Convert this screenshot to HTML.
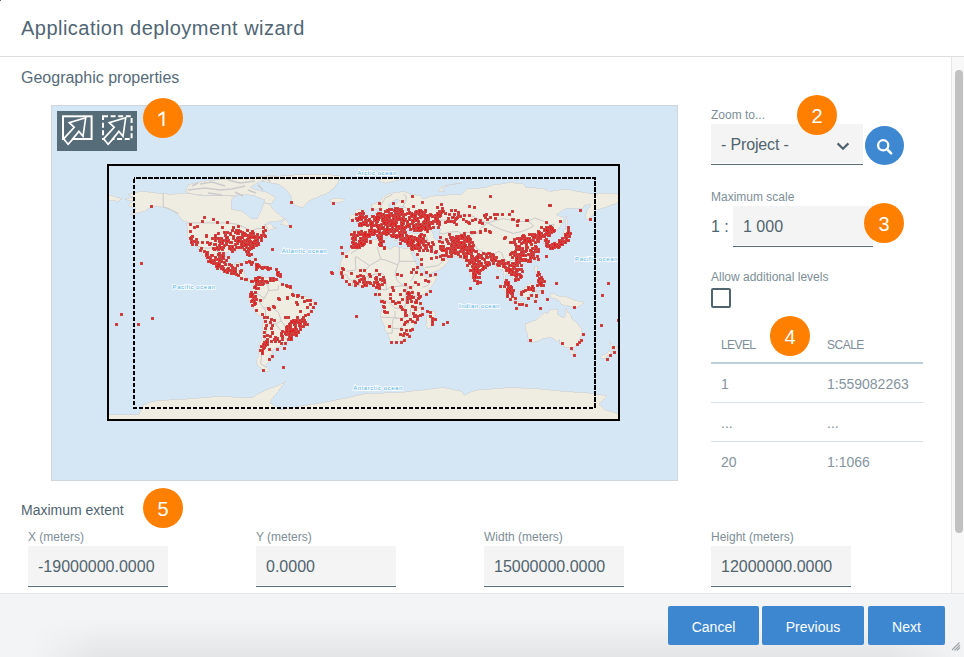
<!DOCTYPE html>
<html><head><meta charset="utf-8">
<style>
*{margin:0;padding:0;box-sizing:border-box}
html,body{width:964px;height:657px;overflow:hidden;background:#fff}
body{position:relative;font-family:"Liberation Sans",sans-serif;color:#4f6472}
.a{position:absolute;white-space:nowrap}
.t{line-height:1}
#title{left:21px;top:18px;font-size:20px;letter-spacing:0.47px;color:#4f6574}
#hdrline{left:0;top:56px;width:964px;height:1px;background:#dedfe0}
#sb{left:951px;top:57px;width:13px;height:536px;background:#f8f8f8;border-left:1px solid #e6e6e6}
#thumb{left:955px;top:70px;width:8px;height:463px;background:#c1c1c1;border-radius:4px}
#geo{left:21px;top:70px;font-size:16px;color:#566b79}
#map{left:51px;top:105px;width:627px;height:376px;background:#d5e6f4;border:1px solid #d0d6da;overflow:hidden}
#tb{left:57px;top:111px;width:80px;height:40px;background:#566c79}
.circ{position:absolute;width:40px;height:40px;border-radius:50%;background:#ff8000;color:#fff;font-size:20px;text-align:center;line-height:41px;padding-top:1px}
.lbl{font-size:12px;color:#7d8e98}
.inp{position:absolute;background:#f4f4f4;box-shadow:0 1px 0 #fff,0 2px 0 #586d7a;font-size:16px;color:#50646f}
.btn{position:absolute;top:606px;height:39px;background:#3d87d0;color:#fff;font-size:14px;text-align:center;line-height:42px;border-radius:2px}
#footer{left:0;top:593px;width:964px;height:64px;background:#f3f4f6;border-top:1px solid #e4e5e7}
th,td{font-weight:normal}
</style></head><body>
<div class="a" style="left:0;top:0;width:1px;height:1px;background:#666"></div>
<div class="a t" id="title">Application deployment wizard</div>
<div class="a" id="hdrline"></div>
<div class="a t" id="geo">Geographic properties</div>

<div class="a" id="map"><svg style="position:absolute;left:0;top:0" width="625" height="374" viewBox="52 106 625 374" shape-rendering="crispEdges"><path d="M124.8,199.3 133.3,197.3 127.7,194.6 140.7,191.2 153.3,192.6 163.2,193.6 171.8,194.5 181.7,193.0 191.7,193.8 200.2,195.9 210.2,195.9 224.4,195.9 242.9,195.2 257.1,198.7 271.3,205.8 271.3,206.8 275.6,211.5 282.7,217.2 284.5,218.6 278.4,221.5 269.9,221.5 264.2,225.0 271.3,223.6 272.7,227.2 277.0,227.9 269.9,230.0 264.2,230.3 264.2,233.3 258.5,235.0 255.7,240.0 256.4,242.5 248.6,247.8 250.0,254.2 249.3,256.8 246.3,253.5 244.3,249.9 237.2,249.6 236.5,251.4 230.1,250.5 225.4,253.5 224.7,260.6 227.2,265.6 229.3,266.7 234.3,266.0 235.3,262.7 240.0,262.0 238.6,266.3 237.9,270.1 244.3,270.0 245.0,275.5 245.0,278.4 250.7,279.1 253.7,280.4 252.8,281.9 250.7,281.9 247.8,281.9 242.9,279.1 238.6,274.8 232.9,273.8 227.2,271.3 221.5,269.8 215.8,266.3 211.6,262.0 208.7,258.5 205.9,254.9 203.8,251.4 200.6,247.5 203.0,251.4 204.5,255.6 207.4,259.9 204.0,257.3 201.3,252.8 197.8,247.8 195.4,244.2 192.2,243.5 189.5,239.0 187.0,235.1 187.4,226.9 186.4,223.8 188.8,222.9 182.4,220.4 178.2,215.1 174.6,211.5 168.9,209.4 164.6,207.6 156.1,206.1 148.3,208.4 144.7,211.5 139.0,212.2 133.3,214.4 129.8,215.2 136.2,209.4 133.3,207.6 128.4,205.8 129.8,203.0 134.8,200.9 129.1,200.9Z M262.1,181.2 278.7,184.4 286.0,189.6 291.1,195.9 292.2,203.1 297.3,206.1 302.5,207.8 308.9,201.0 318.1,196.9 326.3,193.8 334.7,187.6 338.9,180.2 340.9,176.1 322.2,174.1 291.1,175.1 269.9,177.0Z M185.5,191.8 188.7,184.4 204.2,181.2 216.7,179.8 228.1,179.2 242.6,178.3 258.5,176.7 272.7,175.3 275.6,176.3 261.4,181.0 255.7,183.8 250.0,187.4 257.1,190.2 267.0,192.3 275.6,197.6 271.3,203.7 261.4,203.3 250.0,201.6 240.0,198.7 228.6,195.2 207.3,195.5 190.2,193.8Z M279.8,224.9 284.8,219.2 288.4,222.5 288.9,225.0 287.7,226.3 284.1,224.9Z M254.2,280.4 256.4,277.7 259.9,276.5 262.1,275.0 262.8,277.0 266.3,277.7 272.7,277.5 276.3,277.7 278.4,280.5 282.7,284.1 289.8,285.5 292.6,290.0 292.9,294.0 300.5,296.2 307.6,296.9 313.7,300.4 314.0,304.7 310.4,309.7 308.3,317.5 306.1,322.5 302.6,325.3 294.8,329.6 294.5,333.1 289.8,338.8 286.9,341.7 282.0,342.4 282.7,345.9 275.6,348.1 271.3,350.9 272.7,353.0 267.8,358.0 270.2,360.6 265.6,365.1 266.6,367.3 269.9,370.8 266.3,371.5 261.4,368.7 257.1,365.1 256.4,359.4 258.5,354.5 259.2,345.2 262.1,338.1 262.1,328.2 263.8,318.6 256.4,313.9 252.8,306.8 248.1,299.3 250.0,295.4 249.5,291.9 251.7,289.8 253.8,286.9 253.5,283.1Z M355.4,241.7 362.3,242.3 368.0,240.3 378.0,239.6 379.4,240.3 378.7,243.5 379.4,245.4 385.4,246.7 390.8,249.5 392.2,247.8 392.5,246.4 397.2,246.4 400.0,247.8 405.7,248.5 409.7,248.1 410.1,249.9 411.4,253.5 414.2,259.2 416.8,264.9 418.5,267.3 420.2,270.6 423.2,274.1 425.3,275.8 427.0,277.8 430.6,276.7 436.6,275.8 436.7,277.8 434.9,281.9 432.0,286.2 428.5,289.8 423.5,294.0 420.9,296.6 419.5,299.4 419.9,302.6 419.6,305.4 421.4,307.5 421.5,313.2 421.4,314.6 416.1,318.5 414.0,323.2 414.2,326.7 410.4,329.6 410.0,333.8 407.1,336.7 402.9,340.0 400.0,341.0 395.0,341.2 392.2,342.1 389.9,341.2 389.6,338.1 387.2,333.3 385.1,330.3 384.4,324.6 380.5,317.5 380.8,311.8 383.1,309.0 382.7,305.1 381.2,301.1 380.5,299.0 376.8,294.3 377.3,289.8 377.7,286.9 376.0,286.2 372.3,286.5 370.1,283.6 365.9,283.9 360.9,285.9 357.4,285.2 353.1,286.3 348.8,283.4 345.0,280.5 342.4,277.2 339.9,275.0 338.9,271.7 340.3,264.9 341.0,262.7 339.6,262.7 343.1,255.5 345.3,253.1 349.8,250.6 350.1,246.4 353.8,244.5Z M433.9,309.7 435.6,314.6 434.6,316.8 430.6,328.2 427.8,328.9 425.9,325.3 426.3,321.0 427.0,315.6 429.9,314.6 432.0,311.8Z M355.8,241.4 360.9,240.4 363.8,237.4 363.3,236.4 368.3,233.0 368.0,231.2 370.1,230.9 374.4,230.3 376.3,229.5 378.7,231.6 381.5,233.6 386.1,235.7 385.9,238.6 387.9,237.1 390.1,235.6 386.5,233.6 381.2,229.3 381.2,228.0 383.2,227.7 385.1,229.3 390.1,232.3 391.5,235.7 393.6,237.8 394.3,240.3 396.5,240.7 397.2,238.6 396.0,235.0 400.7,234.6 401.2,236.4 402.1,238.6 402.9,240.3 407.1,240.7 410.4,241.3 414.9,240.7 414.7,242.8 414.2,245.0 413.4,246.7 412.5,248.2 410.1,249.9 411.4,252.4 412.4,253.1 413.5,250.6 415.7,255.6 418.5,259.2 419.5,262.0 422.1,265.6 424.5,269.8 425.2,274.1 427.8,274.4 433.4,272.4 438.0,270.4 442.7,267.7 444.8,265.9 446.9,263.4 448.8,260.6 446.9,259.0 444.8,258.5 443.8,255.2 442.0,257.0 437.7,258.5 437.0,255.9 436.3,257.6 434.9,254.9 432.7,252.1 432.0,249.9 434.9,249.9 437.0,253.1 441.3,254.6 444.1,254.2 445.5,256.0 451.2,256.8 458.3,256.5 460.5,258.9 463.3,260.3 466.9,262.7 467.3,265.7 468.3,269.8 470.1,274.4 472.6,280.1 474.0,281.1 475.4,279.4 478.0,274.1 477.8,270.6 480.8,269.1 485.8,264.4 487.5,262.0 490.3,261.6 493.9,260.6 495.0,263.2 497.9,269.8 498.6,269.8 502.6,269.1 503.8,274.1 503.8,278.4 506.4,284.1 507.8,288.6 511.0,290.8 512.1,290.3 510.8,286.2 509.1,283.8 506.4,280.5 504.8,277.7 506.0,273.5 507.3,274.7 509.5,275.5 512.8,277.7 512.9,280.4 515.6,277.8 519.1,276.1 519.2,273.0 517.4,269.6 515.4,266.3 515.5,263.4 517.4,262.0 520.8,262.2 524.5,260.9 529.7,259.9 533.7,255.9 537.1,250.6 535.8,248.5 535.1,245.7 533.3,242.8 534.8,241.3 538.0,239.4 533.0,239.7 531.6,237.7 533.7,236.0 536.5,234.4 536.1,237.4 540.1,236.0 541.7,238.8 543.7,239.3 543.4,243.5 547.5,242.5 547.8,240.0 545.1,236.0 548.2,234.3 549.6,232.4 552.9,231.7 556.5,230.3 560.7,225.8 563.6,221.2 563.6,217.2 559.3,216.1 556.0,214.8 560.0,212.2 565.7,208.4 575.7,208.0 582.8,208.3 584.2,205.1 591.3,204.8 586.3,211.2 585.6,218.6 586.6,220.1 591.3,216.5 594.9,212.7 595.9,210.1 605.5,207.3 611.2,204.7 616.2,203.7 618.3,201.3 619.8,200.2 619.8,194.5 612.6,193.3 605.5,193.0 591.3,193.6 579.9,191.9 570.0,189.9 562.9,189.5 548.6,191.6 546.5,189.5 538.7,188.1 525.9,187.6 523.0,183.8 515.9,183.1 511.7,182.1 503.1,183.8 491.8,185.2 486.1,187.4 477.5,188.1 466.1,189.1 460.5,194.5 449.1,194.8 442.0,195.5 430.6,196.2 426.3,198.0 422.1,198.0 420.6,195.9 410.7,193.9 403.6,191.6 396.5,192.3 387.9,194.0 383.7,196.6 381.5,199.4 378.0,202.3 371.3,204.4 371.3,206.7 371.9,209.0 373.7,210.1 375.8,209.7 378.7,208.0 379.7,209.4 381.5,212.2 382.0,213.8 384.4,213.0 387.2,212.2 390.1,208.0 388.6,205.8 388.9,203.7 393.6,200.9 395.8,199.0 399.7,200.2 394.2,206.3 396.3,207.6 399.3,206.8 403.6,206.6 406.4,207.4 403.6,208.0 397.2,208.4 397.9,211.5 393.9,211.2 393.6,213.0 392.9,214.7 390.1,214.9 384.4,215.9 379.4,215.8 378.3,215.2 377.7,210.8 375.3,212.2 375.8,214.4 376.3,215.8 373.7,216.5 370.6,217.9 368.7,219.5 366.3,220.2 363.8,222.2 361.6,221.9 361.6,223.3 357.1,223.8 360.6,225.5 362.0,227.9 361.5,230.9 358.1,230.7 352.4,230.4 350.5,231.4 351.2,233.6 350.2,237.4 351.2,240.0 353.2,239.7 354.8,240.7Z M107.8,200.2 114.9,200.9 118.4,201.2 122.4,198.7 114.9,196.6 107.8,194.8Z M355.6,221.3 365.7,219.8 366.2,217.6 364.0,216.5 361.6,214.4 360.9,213.0 361.2,210.7 359.5,209.3 356.6,209.3 354.9,211.8 355.8,214.0 356.9,214.7 359.5,216.7 357.1,217.5 356.2,218.9 359.5,219.4Z M355.2,218.4 355.1,215.8 355.2,214.1 352.4,214.0 349.5,215.5 348.8,218.6 350.2,219.4 354.6,218.4Z M329.6,201.6 330.3,199.4 333.9,198.4 340.3,198.3 345.3,199.9 343.1,201.6 337.4,202.6 332.5,202.1Z M379.4,181.0 385.1,183.1 389.4,182.4 402.1,179.2 392.2,178.1 380.8,179.1Z M437.7,190.9 444.8,192.2 442.0,188.8 449.1,184.9 460.5,183.4 451.9,184.2 442.0,186.6 439.1,190.2Z M565.7,227.2 567.8,222.9 567.1,218.6 566.4,215.5 565.7,220.1 565.6,226.3Z M562.9,233.6 565.0,233.7 570.7,231.0 565.4,228.0 563.6,231.2Z M549.9,244.2 555.8,244.8 558.6,243.4 562.9,242.8 564.0,241.8 564.3,238.1 565.7,236.3 565.0,233.7 562.9,234.6 562.6,237.8 560.0,240.0 557.2,241.7 552.9,242.1 550.5,243.1Z M549.1,244.8 551.3,245.2 550.3,248.1 548.9,248.2Z M552.2,245.7 555.3,244.2 554.6,245.4Z M534.6,259.9 535.8,256.6 537.3,257.0 535.6,261.5Z M518.2,265.3 520.9,264.0 521.6,264.7 519.6,266.7Z M534.4,266.3 537.7,266.3 537.3,269.8 540.1,274.1 539.1,273.0 535.8,273.1 535.1,271.3Z M537.3,282.6 543.7,282.2 543.0,279.4 539.4,280.4Z M518.8,290.5 521.6,290.5 527.3,285.5 530.1,282.6 533.4,284.9 531.6,286.2 532.3,291.2 529.4,294.7 528.7,297.9 526.6,297.2 522.3,297.0 520.2,295.4 518.8,292.6Z M499.3,284.6 502.4,285.2 506.5,289.5 511.7,294.0 514.5,296.9 514.5,300.8 512.4,301.0 508.8,298.3 506.4,294.0 504.1,290.2 500.0,287.2Z M513.4,302.3 514.5,301.1 517.8,301.6 521.6,301.7 523.8,302.4 526.5,303.7 526.6,305.0 521.6,304.3 517.4,303.7 513.8,302.6Z M533.6,300.4 535.1,300.6 534.8,296.7 536.5,299.4 539.1,298.7 536.5,295.2 539.1,293.9 535.4,292.0 541.7,290.5 534.4,291.2 533.7,293.3 532.7,296.6Z M550.1,294.0 554.3,293.6 557.2,295.9 564.3,296.3 570.0,298.0 574.2,300.4 578.5,301.1 584.2,302.6 577.8,307.5 572.8,307.1 567.8,305.7 564.3,305.7 561.4,304.3 560.0,301.8 555.8,299.0 552.2,298.3 550.8,296.9Z M477.2,284.1 477.5,278.7 479.4,280.5 480.1,282.6 478.4,284.2Z M525.2,323.9 525.9,330.3 527.3,333.8 528.3,340.0 527.3,341.4 531.4,342.5 539.4,340.8 543.0,338.5 550.1,337.4 554.3,339.2 556.6,342.2 559.7,339.5 559.3,343.5 562.1,343.1 563.7,346.6 567.8,347.8 571.8,348.2 577.1,345.9 578.8,340.8 582.1,333.1 581.4,328.2 578.2,324.6 575.7,321.8 571.7,318.9 570.4,313.9 568.0,312.5 566.4,307.8 565.0,311.1 565.1,316.1 563.7,317.6 561.4,316.8 557.0,313.9 558.5,310.1 552.9,309.0 549.1,310.4 547.9,313.8 544.1,312.2 541.5,314.4 537.5,318.2 535.8,320.3 530.1,322.0 526.6,323.6Z M569.5,350.5 574.7,350.8 574.2,353.8 572.1,354.6 570.3,352.8Z M609.4,341.5 611.9,343.8 614.1,346.1 617.6,346.2 616.8,348.4 614.8,349.5 612.6,351.6 612.1,349.2 610.9,348.4 612.1,346.6 609.8,342.4Z M609.4,350.2 611.6,351.9 610.2,353.8 607.4,355.9 605.2,358.7 600.5,358.0 603.1,355.2 606.7,353.5 608.4,351.6Z M242.9,261.5 246.4,259.7 250.0,259.6 253.8,261.6 258.2,263.9 253.2,264.3 249.3,261.6 245.0,261.0Z M257.9,266.4 260.4,264.3 266.5,266.1 262.1,267.4Z M107.8,414.6 139.0,414.6 143.3,405.0 150.4,402.1 158.9,400.5 186.0,399.1 218.3,396.4 250.5,397.8 255.9,395.0 266.8,389.7 277.6,385.6 285.7,381.6 281.3,386.5 275.0,395.0 269.5,403.0 280.0,409.9 299.8,406.4 320.7,403.0 347.7,397.8 365.0,393.7 401.2,392.4 420.5,390.2 442.5,387.5 461.7,391.6 464.4,395.1 475.4,390.2 511.2,387.5 538.7,388.9 566.3,391.6 588.2,393.0 607.4,395.7 599.0,404.0 605.0,409.9 618.3,413.6 619.8,414.2 619.8,420.6 107.8,420.6Z" fill="#efece2" stroke="#cfcfcf" stroke-width="0.6"/><path d="M403.0,232.2 404.4,229.7 406.0,228.2 408.6,226.3 411.4,227.2 410.0,228.2 411.4,229.3 414.2,228.5 415.7,228.2 418.1,229.5 420.2,230.7 422.8,233.6 414.9,233.4 410.7,232.9 407.8,234.0 405.0,234.0 403.6,233.2Z M433.4,226.5 431.3,227.9 430.6,230.0 434.0,235.3 433.4,237.8 435.6,240.0 440.4,240.0 439.8,236.4 438.8,233.6 439.1,232.2 441.3,229.3 436.7,228.3 439.1,226.2 434.9,226.0Z M231.1,200.0 238.5,194.5 253.4,195.3 264.6,200.0 261.8,209.3 257.1,218.6 251.5,218.6 242.1,211.2 231.1,209.3Z" fill="#d5e6f4" stroke="#cfcfcf" stroke-width="0.6"/><path d="M188,190 L205,188 L220,190 L232,189 L245,186 M200,184 L212,182 L225,186 M228,180 L240,183 L255,181 M235,192 L243,196 M208,193 L222,195 M258,185 L263,190 M192,186 L198,183 M214,178 L226,177 M248,190 L256,193 M270,182 L266,176" fill="none" stroke="#cbcbcb" stroke-width="1.6" shape-rendering="auto"/><path d="M188.8,222.9 L228.6,222.9 L237.2,224.3 L245.7,227.9 L251.4,231.2 L257.1,228.6 L262.8,228.6 L265.6,225.2 L267.3,227.7 L268.5,228.9 M163.2,193.6 L163.2,206.8 L168.9,208.7 L178.9,213.7 M197.3,246.4 L205.9,248.1 L210.2,248.1 L212.3,247.4 L217.3,251.4 L221.5,252.8 L225.5,255.8 M232.9,272.0 L232.9,267.0 L237.2,267.0 M262.1,275.5 L260.6,282.6 L267.8,284.1 L268.5,290.5 M278.4,285.5 L278.4,289.8 L268.5,290.5 L264.2,298.3 L259.9,302.6 L263.5,308.2 L271.3,306.8 L278.4,312.5 L281.3,321.0 L285.5,326.7 L286.9,329.6 L282.7,335.3 L287.7,340.5 M249.5,297.6 L257.1,293.3 L264.2,298.3 M263.8,318.6 L265.6,316.8 L265.6,311.1 L263.5,308.2 M267.0,323.9 L266.3,331.0 L264.2,339.5 L262.1,349.5 L261.4,358.0 L260.6,363.7 L266.3,367.3 M267.0,323.9 L275.6,323.9 L281.3,321.0 M275.6,323.9 L281.3,331.0 L286.9,329.6 M360.9,242.8 L361.6,247.1 L351.4,252.8 L351.4,253.8 M346.7,271.3 L355.9,269.8 L355.2,257.0 L356.9,257.0 L369.4,265.6 L380.8,259.2 L378.0,249.9 L377.3,247.1 M399.3,247.8 L399.3,261.3 L416.4,261.3 M380.8,259.2 L385.1,259.9 L397.9,264.9 L397.9,264.2 L399.3,261.3 M397.9,264.9 L395.0,274.1 L397.2,280.5 M368.7,276.2 L375.1,274.1 L382.2,273.4 L384.4,275.5 M369.4,265.6 L365.2,271.3 L368.7,276.2 M418.5,267.0 L415.7,272.7 L412.1,279.1 L410.7,281.2 M397.2,280.5 L402.9,285.5 L407.8,287.3 L412.1,286.2 L414.2,285.5 M381.5,299.7 L386.5,301.1 L390.8,304.0 L395.0,308.2 L397.9,308.2 L403.6,309.7 L405.7,304.0 L405.0,296.9 L406.4,290.5 L407.8,287.3 M386.5,289.8 L389.4,287.6 L402.9,285.5 M380.5,317.2 L392.2,317.5 L397.9,318.2 M387.2,333.3 L392.2,333.1 L392.2,323.9 L393.6,318.2 M392.2,328.2 L399.3,328.9 L405.0,323.9 L409.3,323.9 M395.0,311.1 L395.0,318.2 L402.1,318.2 L410.0,315.4 L410.7,308.2 M419.9,299.1 L411.8,294.0 L412.1,286.2 M422.8,287.1 L427.0,286.2 L431.3,281.2 L426.3,279.8 M421.4,307.5 L413.5,309.0 L410.7,306.1 M339.6,274.8 L346.7,274.8 L348.1,278.4 L352.4,281.2 L356.6,277.7 L359.5,277.0 L365.2,277.0 L368.7,276.2 M352.4,286.2 L352.4,281.2 M359.5,285.5 L359.5,277.0 M365.2,284.1 L365.2,277.0 M367.6,283.6 L368.7,276.2 M376.0,286.2 L380.8,282.6 L384.4,275.5 M377.3,289.8 L379.8,289.5 L386.5,289.8 M384.4,275.5 L385.8,281.9 L386.5,289.8 M433.4,226.5 L435.6,220.1 L450.5,220.1 L461.9,214.4 L471.8,215.8 L481.8,220.8 L487.5,222.9 M487.5,222.9 L503.1,218.6 L517.4,221.5 L528.7,221.5 L534.4,217.9 L544.4,221.5 L550.1,225.0 L554.3,224.3 L550.1,231.4 L549.5,232.3 M487.5,222.9 L500.3,229.3 L513.1,233.3 L522.3,231.4 L528.7,228.6 L533.7,225.8 L528.7,221.5 M487.5,222.9 L481.1,227.9 L477.5,232.9 L470.4,235.0 M439.1,232.9 L443.4,233.9 L449.1,232.2 L457.6,231.4 L461.9,234.3 L464.7,232.2 L477.5,232.9 M440.4,240.0 L449.8,240.0 L450.5,244.2 L451.2,250.6 L453.4,256.3 M451.2,250.6 L457.6,250.6 L463.3,248.5 L464.7,244.2 L469.0,240.0 M460.5,258.9 L464.7,257.8 L469.7,248.5 L473.3,242.8 M473.3,242.8 L477.5,249.2 L483.2,252.1 L488.9,253.5 L494.6,253.5 L498.9,251.4 L501.7,252.8 M501.7,252.8 L503.8,258.5 L507.4,262.0 L513.1,259.9 L517.4,262.0 M509.5,275.5 L513.8,272.0 L516.6,272.0 M414.9,247.1 L419.2,247.1 L430.6,251.4 L432.0,249.9 M424.9,267.7 L437.7,265.6 L443.0,261.3 L444.1,257.8 M414.9,240.7 L423.5,240.0 L427.5,239.7 L426.3,236.4 M427.5,239.7 L429.2,245.7 L432.0,249.9 M423.5,240.0 L422.1,243.5 L419.2,247.1 M411.4,218.2 L417.8,221.5 L420.6,224.3 L417.8,225.8 M403.6,194.5 L406.4,196.6 L405.7,201.6 L402.9,206.6 M392.2,194.5 L385.1,198.0 L380.8,205.8 L380.1,208.7" fill="none" stroke="#c9c9c9" stroke-width="1" shape-rendering="auto"/><path d="M150,205h3v3h-3zM203,216h3v3h-3zM201,220h3v3h-3zM212,218h3v3h-3zM216,221h3v3h-3zM226,221h3v3h-3zM189,223h3v3h-3zM193,226h3v3h-3zM196,225h3v3h-3zM189,230h3v3h-3zM221,226h3v3h-3zM232,226h3v3h-3zM237,225h3v3h-3zM231,229h3v3h-3zM226,231h3v3h-3zM262,226h3v3h-3zM205,234h3v3h-3zM214,234h3v3h-3zM214,238h3v3h-3zM201,241h3v3h-3zM213,243h3v3h-3zM212,247h3v3h-3zM218,240h3v3h-3zM218,244h3v3h-3zM219,247h3v3h-3zM222,246h3v3h-3zM254,258h3v3h-3zM207,260h3v3h-3zM240,263h3v3h-3zM236,264h3v3h-3zM245,261h3v3h-3zM255,267h3v3h-3zM236,264h3v3h-3zM240,263h3v3h-3zM245,261h3v3h-3zM248,260h3v3h-3zM251,261h3v3h-3zM255,263h3v3h-3zM256,265h3v3h-3zM255,268h3v3h-3zM260,266h3v3h-3zM263,266h3v3h-3zM266,267h3v3h-3zM269,267h3v3h-3zM275,268h3v3h-3zM276,271h3v3h-3zM277,274h3v3h-3zM279,275h3v3h-3zM275,278h3v3h-3zM245,278h3v3h-3zM251,280h3v3h-3zM281,283h3v3h-3zM286,285h3v3h-3zM289,285h3v3h-3zM291,293h3v3h-3zM296,295h3v3h-3zM297,294h3v3h-3zM301,296h3v3h-3zM295,301h3v3h-3zM296,303h3v3h-3zM303,300h3v3h-3zM306,299h3v3h-3zM309,299h3v3h-3zM314,302h3v3h-3zM312,306h3v3h-3zM309,303h3v3h-3zM306,306h3v3h-3zM310,310h3v3h-3zM307,313h3v3h-3zM304,314h3v3h-3zM299,310h3v3h-3zM286,296h3v3h-3zM278,298h3v3h-3zM259,299h3v3h-3zM268,308h3v3h-3zM273,306h3v3h-3zM261,313h3v3h-3zM284,316h3v3h-3zM287,316h3v3h-3zM302,316h3v3h-3zM330,271h3v3h-3zM342,268h3v3h-3zM340,271h3v3h-3zM341,275h3v3h-3zM345,280h3v3h-3zM348,283h3v3h-3zM263,316h3v3h-3zM266,316h3v3h-3zM270,318h3v3h-3zM273,319h3v3h-3zM264,320h3v3h-3zM265,324h3v3h-3zM269,321h3v3h-3zM271,324h3v3h-3zM264,327h3v3h-3zM263,331h3v3h-3zM270,327h3v3h-3zM271,332h3v3h-3zM266,334h3v3h-3zM263,335h3v3h-3zM274,336h3v3h-3zM276,337h3v3h-3zM280,334h3v3h-3zM281,330h3v3h-3zM290,320h3v3h-3zM289,327h3v3h-3zM299,328h3v3h-3zM289,329h3v3h-3zM292,319h3v3h-3zM306,323h3v3h-3zM292,328h3v3h-3zM289,322h3v3h-3zM298,324h3v3h-3zM292,320h3v3h-3zM290,338h3v3h-3zM288,333h3v3h-3zM288,324h3v3h-3zM297,331h3v3h-3zM291,321h3v3h-3zM289,338h3v3h-3zM304,323h3v3h-3zM299,325h3v3h-3zM290,321h3v3h-3zM297,321h3v3h-3zM293,320h3v3h-3zM286,330h3v3h-3zM302,325h3v3h-3zM284,332h3v3h-3zM299,328h3v3h-3zM290,330h3v3h-3zM286,325h3v3h-3zM304,321h3v3h-3zM295,319h3v3h-3zM291,330h3v3h-3zM298,319h3v3h-3zM286,327h3v3h-3zM285,333h3v3h-3zM301,318h3v3h-3zM295,328h3v3h-3zM290,336h3v3h-3zM294,320h3v3h-3zM288,323h3v3h-3zM294,327h3v3h-3zM292,329h3v3h-3zM285,330h3v3h-3zM289,337h3v3h-3zM289,331h3v3h-3zM295,334h3v3h-3zM302,320h3v3h-3zM286,325h3v3h-3zM294,326h3v3h-3zM293,323h3v3h-3zM304,321h3v3h-3zM288,326h3v3h-3zM293,322h3v3h-3zM290,337h3v3h-3zM296,316h3v3h-3zM303,319h3v3h-3zM295,320h3v3h-3zM290,334h3v3h-3zM294,325h3v3h-3zM285,329h3v3h-3zM287,338h3v3h-3zM304,321h3v3h-3zM297,330h3v3h-3zM293,329h3v3h-3zM288,332h3v3h-3zM289,325h3v3h-3zM299,322h3v3h-3zM291,333h3v3h-3zM285,326h3v3h-3zM290,337h3v3h-3zM292,319h3v3h-3zM303,322h3v3h-3zM286,328h3v3h-3zM290,330h3v3h-3zM300,320h3v3h-3zM298,321h3v3h-3zM294,322h3v3h-3zM263,331h3v3h-3zM263,335h3v3h-3zM271,331h3v3h-3zM269,335h3v3h-3zM266,338h3v3h-3zM273,338h3v3h-3zM276,338h3v3h-3zM280,332h3v3h-3zM281,335h3v3h-3zM284,331h3v3h-3zM288,335h3v3h-3zM290,338h3v3h-3zM281,338h3v3h-3zM280,342h3v3h-3zM284,342h3v3h-3zM263,341h3v3h-3zM265,341h3v3h-3zM261,345h3v3h-3zM259,349h3v3h-3zM261,352h3v3h-3zM268,348h3v3h-3zM276,348h3v3h-3zM283,347h3v3h-3zM271,355h3v3h-3zM268,358h3v3h-3zM262,369h3v3h-3zM282,366h3v3h-3zM270,340h3v3h-3zM274,340h3v3h-3zM278,340h3v3h-3zM293,331h3v3h-3zM294,333h3v3h-3zM291,329h3v3h-3zM295,333h3v3h-3zM295,333h3v3h-3zM288,330h3v3h-3zM289,336h3v3h-3zM295,331h3v3h-3zM289,330h3v3h-3zM290,334h3v3h-3zM290,336h3v3h-3zM294,331h3v3h-3zM265,340h3v3h-3zM261,350h3v3h-3zM262,343h3v3h-3zM265,342h3v3h-3zM261,351h3v3h-3zM266,343h3v3h-3zM264,344h3v3h-3zM266,341h3v3h-3zM266,341h3v3h-3zM266,343h3v3h-3zM260,345h3v3h-3zM264,343h3v3h-3zM263,346h3v3h-3zM262,347h3v3h-3zM261,349h3v3h-3zM411,195h3v3h-3zM401,200h3v3h-3zM392,202h3v3h-3zM378,202h3v3h-3zM421,201h3v3h-3zM440,203h3v3h-3zM436,206h3v3h-3zM412,205h3v3h-3zM407,208h3v3h-3zM371,208h3v3h-3zM379,208h3v3h-3zM332,202h3v3h-3zM351,219h3v3h-3zM358,224h3v3h-3zM432,226h3v3h-3zM437,226h3v3h-3zM369,241h3v3h-3zM340,246h3v3h-3zM383,246h3v3h-3zM399,242h3v3h-3zM489,195h3v3h-3zM468,205h3v3h-3zM473,206h3v3h-3zM450,209h3v3h-3zM457,211h3v3h-3zM453,213h3v3h-3zM451,216h3v3h-3zM455,217h3v3h-3zM457,214h3v3h-3zM463,214h3v3h-3zM462,218h3v3h-3zM468,214h3v3h-3zM465,220h3v3h-3zM468,222h3v3h-3zM471,219h3v3h-3zM474,218h3v3h-3zM479,219h3v3h-3zM478,221h3v3h-3zM481,222h3v3h-3zM483,214h3v3h-3zM485,213h3v3h-3zM484,216h3v3h-3zM486,218h3v3h-3zM489,216h3v3h-3zM493,213h3v3h-3zM496,213h3v3h-3zM494,217h3v3h-3zM501,213h3v3h-3zM508,213h3v3h-3zM511,210h3v3h-3zM511,218h3v3h-3zM512,218h3v3h-3zM517,219h3v3h-3zM526,219h3v3h-3zM516,224h3v3h-3zM479,231h3v3h-3zM484,229h3v3h-3zM489,231h3v3h-3zM470,231h3v3h-3zM473,231h3v3h-3zM549,204h3v3h-3zM545,221h3v3h-3zM559,220h3v3h-3zM567,226h3v3h-3zM503,237h3v3h-3zM449,248h3v3h-3zM463,244h3v3h-3zM468,243h3v3h-3zM466,237h3v3h-3zM457,246h3v3h-3zM468,237h3v3h-3zM457,239h3v3h-3zM460,237h3v3h-3zM452,239h3v3h-3zM457,241h3v3h-3zM449,236h3v3h-3zM460,242h3v3h-3zM466,240h3v3h-3zM461,235h3v3h-3zM461,247h3v3h-3zM451,240h3v3h-3zM466,237h3v3h-3zM470,245h3v3h-3zM467,235h3v3h-3zM455,240h3v3h-3zM460,242h3v3h-3zM454,244h3v3h-3zM462,236h3v3h-3zM469,245h3v3h-3zM452,239h3v3h-3zM454,248h3v3h-3zM463,232h3v3h-3zM456,246h3v3h-3zM461,246h3v3h-3zM466,249h3v3h-3zM465,248h3v3h-3zM468,240h3v3h-3zM471,241h3v3h-3zM472,244h3v3h-3zM461,236h3v3h-3zM455,243h3v3h-3zM469,241h3v3h-3zM465,236h3v3h-3zM451,236h3v3h-3zM456,237h3v3h-3zM463,234h3v3h-3zM455,244h3v3h-3zM460,241h3v3h-3zM460,235h3v3h-3zM460,247h3v3h-3zM464,244h3v3h-3zM471,245h3v3h-3zM458,245h3v3h-3zM471,248h3v3h-3zM460,245h3v3h-3zM463,242h3v3h-3zM455,235h3v3h-3zM458,243h3v3h-3zM460,234h3v3h-3zM461,234h3v3h-3zM459,241h3v3h-3zM450,243h3v3h-3zM453,239h3v3h-3zM450,238h3v3h-3zM455,237h3v3h-3zM469,238h3v3h-3zM548,245h3v3h-3zM545,239h3v3h-3zM548,245h3v3h-3zM548,244h3v3h-3zM547,240h3v3h-3zM548,244h3v3h-3zM558,241h3v3h-3zM568,235h3v3h-3zM564,240h3v3h-3zM554,243h3v3h-3zM567,239h3v3h-3zM565,234h3v3h-3zM564,236h3v3h-3zM557,244h3v3h-3zM561,237h3v3h-3zM560,242h3v3h-3zM557,244h3v3h-3zM567,232h3v3h-3zM560,240h3v3h-3zM567,231h3v3h-3zM556,243h3v3h-3zM558,245h3v3h-3zM560,243h3v3h-3zM564,240h3v3h-3zM561,243h3v3h-3zM564,234h3v3h-3zM548,204h3v3h-3zM579,209h3v3h-3zM589,218h3v3h-3zM525,219h3v3h-3zM545,221h3v3h-3zM559,220h3v3h-3zM567,227h3v3h-3zM547,229h3v3h-3zM546,229h3v3h-3zM549,227h3v3h-3zM549,227h3v3h-3zM546,232h3v3h-3zM540,226h3v3h-3zM545,232h3v3h-3zM540,226h3v3h-3zM546,227h3v3h-3zM549,225h3v3h-3zM552,229h3v3h-3zM552,230h3v3h-3zM545,229h3v3h-3zM553,229h3v3h-3zM551,228h3v3h-3zM538,231h3v3h-3zM546,227h3v3h-3zM550,231h3v3h-3zM550,226h3v3h-3zM546,229h3v3h-3zM544,233h3v3h-3zM547,231h3v3h-3zM565,237h3v3h-3zM567,230h3v3h-3zM566,239h3v3h-3zM564,241h3v3h-3zM552,246h3v3h-3zM564,233h3v3h-3zM560,240h3v3h-3zM569,232h3v3h-3zM562,240h3v3h-3zM556,245h3v3h-3zM557,246h3v3h-3zM566,232h3v3h-3zM559,241h3v3h-3zM553,246h3v3h-3zM565,238h3v3h-3zM556,243h3v3h-3zM556,243h3v3h-3zM561,243h3v3h-3zM544,239h3v3h-3zM545,238h3v3h-3zM545,239h3v3h-3zM545,241h3v3h-3zM545,239h3v3h-3zM340,246h3v3h-3zM341,252h3v3h-3zM345,255h3v3h-3zM383,247h3v3h-3zM399,242h3v3h-3zM369,240h3v3h-3zM331,272h3v3h-3zM341,267h3v3h-3zM340,272h3v3h-3zM341,276h3v3h-3zM345,280h3v3h-3zM348,283h3v3h-3zM350,272h3v3h-3zM359,269h3v3h-3zM363,269h3v3h-3zM368,273h3v3h-3zM375,269h3v3h-3zM396,273h3v3h-3zM400,274h3v3h-3zM404,283h3v3h-3zM409,286h3v3h-3zM391,286h3v3h-3zM392,289h3v3h-3zM389,293h3v3h-3zM399,293h3v3h-3zM401,298h3v3h-3zM403,289h3v3h-3zM374,293h3v3h-3zM378,293h3v3h-3zM381,300h3v3h-3zM383,301h3v3h-3zM383,306h3v3h-3zM384,311h3v3h-3zM386,311h3v3h-3zM389,297h3v3h-3zM392,300h3v3h-3zM397,301h3v3h-3zM400,306h3v3h-3zM404,309h3v3h-3zM405,314h3v3h-3zM416,253h3v3h-3zM420,258h3v3h-3zM420,263h3v3h-3zM416,266h3v3h-3zM412,268h3v3h-3zM410,271h3v3h-3zM415,271h3v3h-3zM420,273h3v3h-3zM425,271h3v3h-3zM429,274h3v3h-3zM434,273h3v3h-3zM424,279h3v3h-3zM427,280h3v3h-3zM414,281h3v3h-3zM417,283h3v3h-3zM429,290h3v3h-3zM425,293h3v3h-3zM415,301h3v3h-3zM421,307h3v3h-3zM426,310h3v3h-3zM429,311h3v3h-3zM431,317h3v3h-3zM414,314h3v3h-3zM419,314h3v3h-3zM414,306h3v3h-3zM355,315h3v3h-3zM430,257h3v3h-3zM435,256h3v3h-3zM353,246h3v3h-3zM359,241h3v3h-3zM362,239h3v3h-3zM362,243h3v3h-3zM358,244h3v3h-3zM361,243h3v3h-3zM360,241h3v3h-3zM355,246h3v3h-3zM380,244h3v3h-3zM379,241h3v3h-3zM378,284h3v3h-3zM355,282h3v3h-3zM379,278h3v3h-3zM356,282h3v3h-3zM383,279h3v3h-3zM377,286h3v3h-3zM354,284h3v3h-3zM363,277h3v3h-3zM358,280h3v3h-3zM372,284h3v3h-3zM383,281h3v3h-3zM358,279h3v3h-3zM362,275h3v3h-3zM358,279h3v3h-3zM365,281h3v3h-3zM375,278h3v3h-3zM361,285h3v3h-3zM360,278h3v3h-3zM369,275h3v3h-3zM373,281h3v3h-3zM362,281h3v3h-3zM377,283h3v3h-3zM354,281h3v3h-3zM363,284h3v3h-3zM374,277h3v3h-3zM375,281h3v3h-3zM376,283h3v3h-3zM376,285h3v3h-3zM375,286h3v3h-3zM375,276h3v3h-3zM368,281h3v3h-3zM378,273h3v3h-3zM363,283h3v3h-3zM359,274h3v3h-3zM382,276h3v3h-3zM381,279h3v3h-3zM381,283h3v3h-3zM378,287h3v3h-3zM365,284h3v3h-3zM353,280h3v3h-3zM369,282h3v3h-3zM376,281h3v3h-3zM356,275h3v3h-3zM363,278h3v3h-3zM409,297h3v3h-3zM406,296h3v3h-3zM415,300h3v3h-3zM417,292h3v3h-3zM411,291h3v3h-3zM412,296h3v3h-3zM410,296h3v3h-3zM410,295h3v3h-3zM407,292h3v3h-3zM418,296h3v3h-3zM415,299h3v3h-3zM417,293h3v3h-3zM406,298h3v3h-3zM407,293h3v3h-3zM419,295h3v3h-3zM406,292h3v3h-3zM408,292h3v3h-3zM408,294h3v3h-3zM407,291h3v3h-3zM417,297h3v3h-3zM448,233h3v3h-3zM484,228h3v3h-3zM488,230h3v3h-3zM479,230h3v3h-3zM504,236h3v3h-3zM516,224h3v3h-3zM545,221h3v3h-3zM545,255h3v3h-3zM537,258h3v3h-3zM496,276h3v3h-3zM469,287h3v3h-3zM555,282h3v3h-3zM541,291h3v3h-3zM520,291h3v3h-3zM535,294h3v3h-3zM506,294h3v3h-3zM514,297h3v3h-3zM467,221h3v3h-3zM479,221h3v3h-3zM444,221h3v3h-3zM516,220h3v3h-3zM488,263h3v3h-3zM480,262h3v3h-3zM478,260h3v3h-3zM486,263h3v3h-3zM463,255h3v3h-3zM484,266h3v3h-3zM480,262h3v3h-3zM487,252h3v3h-3zM477,253h3v3h-3zM473,262h3v3h-3zM476,270h3v3h-3zM474,250h3v3h-3zM482,266h3v3h-3zM472,249h3v3h-3zM473,270h3v3h-3zM483,258h3v3h-3zM482,252h3v3h-3zM485,253h3v3h-3zM474,274h3v3h-3zM470,251h3v3h-3zM486,256h3v3h-3zM475,250h3v3h-3zM488,252h3v3h-3zM476,257h3v3h-3zM474,273h3v3h-3zM463,246h3v3h-3zM485,255h3v3h-3zM485,263h3v3h-3zM477,255h3v3h-3zM476,255h3v3h-3zM485,263h3v3h-3zM475,268h3v3h-3zM468,249h3v3h-3zM470,257h3v3h-3zM467,259h3v3h-3zM486,264h3v3h-3zM462,245h3v3h-3zM482,267h3v3h-3zM487,261h3v3h-3zM464,245h3v3h-3zM472,276h3v3h-3zM492,254h3v3h-3zM482,265h3v3h-3zM475,256h3v3h-3zM473,257h3v3h-3zM466,264h3v3h-3zM494,258h3v3h-3zM491,253h3v3h-3zM466,252h3v3h-3zM477,281h3v3h-3zM471,255h3v3h-3zM472,262h3v3h-3zM479,262h3v3h-3zM472,263h3v3h-3zM466,246h3v3h-3zM473,272h3v3h-3zM469,261h3v3h-3zM477,265h3v3h-3zM466,259h3v3h-3zM471,260h3v3h-3zM473,268h3v3h-3zM463,248h3v3h-3zM485,255h3v3h-3zM473,267h3v3h-3zM465,258h3v3h-3zM475,268h3v3h-3zM495,256h3v3h-3zM474,275h3v3h-3zM484,261h3v3h-3zM474,258h3v3h-3zM467,252h3v3h-3zM469,249h3v3h-3zM474,250h3v3h-3zM477,260h3v3h-3zM485,253h3v3h-3zM477,255h3v3h-3zM488,262h3v3h-3zM480,256h3v3h-3zM491,259h3v3h-3zM477,255h3v3h-3zM474,265h3v3h-3zM469,269h3v3h-3zM492,255h3v3h-3zM489,255h3v3h-3zM476,282h3v3h-3zM468,262h3v3h-3zM465,255h3v3h-3zM463,254h3v3h-3zM464,255h3v3h-3zM476,276h3v3h-3zM469,250h3v3h-3zM476,268h3v3h-3zM469,260h3v3h-3zM480,264h3v3h-3zM475,263h3v3h-3zM490,258h3v3h-3zM478,272h3v3h-3zM477,256h3v3h-3zM462,252h3v3h-3zM480,254h3v3h-3zM473,275h3v3h-3zM492,257h3v3h-3zM465,259h3v3h-3zM494,259h3v3h-3zM479,281h3v3h-3zM481,257h3v3h-3zM472,268h3v3h-3zM476,271h3v3h-3zM493,258h3v3h-3zM474,276h3v3h-3zM474,259h3v3h-3zM481,268h3v3h-3zM474,274h3v3h-3zM482,265h3v3h-3zM475,270h3v3h-3zM469,248h3v3h-3zM475,266h3v3h-3zM470,254h3v3h-3zM492,262h3v3h-3zM492,257h3v3h-3zM465,252h3v3h-3zM474,276h3v3h-3zM481,268h3v3h-3zM463,256h3v3h-3zM477,271h3v3h-3zM473,279h3v3h-3zM476,280h3v3h-3zM462,249h3v3h-3zM466,250h3v3h-3zM472,272h3v3h-3zM470,269h3v3h-3zM471,265h3v3h-3zM461,246h3v3h-3zM476,269h3v3h-3zM479,269h3v3h-3zM478,276h3v3h-3zM486,256h3v3h-3zM463,246h3v3h-3zM477,263h3v3h-3zM472,273h3v3h-3zM474,266h3v3h-3zM472,262h3v3h-3zM501,262h3v3h-3zM496,263h3v3h-3zM498,264h3v3h-3zM510,264h3v3h-3zM515,268h3v3h-3zM508,268h3v3h-3zM520,268h3v3h-3zM512,267h3v3h-3zM514,274h3v3h-3zM504,266h3v3h-3zM516,264h3v3h-3zM519,274h3v3h-3zM498,264h3v3h-3zM507,267h3v3h-3zM510,269h3v3h-3zM514,263h3v3h-3zM521,270h3v3h-3zM516,273h3v3h-3zM515,275h3v3h-3zM510,273h3v3h-3zM511,271h3v3h-3zM498,261h3v3h-3zM508,264h3v3h-3zM503,265h3v3h-3zM515,273h3v3h-3zM511,273h3v3h-3zM502,263h3v3h-3zM502,265h3v3h-3zM519,275h3v3h-3zM501,259h3v3h-3zM512,265h3v3h-3zM520,275h3v3h-3zM502,263h3v3h-3zM513,265h3v3h-3zM506,262h3v3h-3zM507,261h3v3h-3zM511,270h3v3h-3zM508,271h3v3h-3zM518,268h3v3h-3zM509,269h3v3h-3zM514,278h3v3h-3zM505,268h3v3h-3zM509,268h3v3h-3zM519,276h3v3h-3zM507,261h3v3h-3zM497,260h3v3h-3zM506,262h3v3h-3zM515,270h3v3h-3zM517,278h3v3h-3zM516,269h3v3h-3zM499,260h3v3h-3zM503,262h3v3h-3zM501,262h3v3h-3zM514,279h3v3h-3zM497,264h3v3h-3zM505,268h3v3h-3zM518,273h3v3h-3zM502,259h3v3h-3zM511,262h3v3h-3zM497,260h3v3h-3zM514,271h3v3h-3zM505,269h3v3h-3zM507,269h3v3h-3zM512,262h3v3h-3zM508,270h3v3h-3zM498,264h3v3h-3zM546,245h3v3h-3zM556,243h3v3h-3zM551,243h3v3h-3zM549,247h3v3h-3zM555,245h3v3h-3zM558,240h3v3h-3zM558,239h3v3h-3zM549,247h3v3h-3zM553,243h3v3h-3zM559,243h3v3h-3zM549,246h3v3h-3zM553,244h3v3h-3zM553,242h3v3h-3zM545,244h3v3h-3zM551,246h3v3h-3zM554,244h3v3h-3zM551,247h3v3h-3zM546,242h3v3h-3zM556,243h3v3h-3zM510,292h3v3h-3zM504,282h3v3h-3zM505,279h3v3h-3zM509,289h3v3h-3zM507,282h3v3h-3zM506,291h3v3h-3zM509,289h3v3h-3zM507,283h3v3h-3zM506,283h3v3h-3zM511,292h3v3h-3zM509,285h3v3h-3zM512,289h3v3h-3zM507,281h3v3h-3zM507,290h3v3h-3zM508,291h3v3h-3zM506,289h3v3h-3zM542,284h3v3h-3zM540,284h3v3h-3zM537,272h3v3h-3zM540,284h3v3h-3zM537,280h3v3h-3zM540,283h3v3h-3zM541,278h3v3h-3zM539,283h3v3h-3zM537,279h3v3h-3zM540,281h3v3h-3zM538,277h3v3h-3zM538,273h3v3h-3zM539,277h3v3h-3zM539,282h3v3h-3zM538,278h3v3h-3zM537,271h3v3h-3zM540,276h3v3h-3zM536,274h3v3h-3zM538,282h3v3h-3zM530,287h3v3h-3zM531,285h3v3h-3zM532,289h3v3h-3zM531,286h3v3h-3zM527,288h3v3h-3zM527,287h3v3h-3zM530,288h3v3h-3zM380,300h3v3h-3zM383,301h3v3h-3zM391,300h3v3h-3zM394,302h3v3h-3zM398,301h3v3h-3zM406,301h3v3h-3zM410,300h3v3h-3zM414,301h3v3h-3zM419,302h3v3h-3zM382,305h3v3h-3zM399,305h3v3h-3zM401,308h3v3h-3zM404,311h3v3h-3zM404,314h3v3h-3zM411,305h3v3h-3zM414,308h3v3h-3zM412,312h3v3h-3zM413,315h3v3h-3zM416,315h3v3h-3zM419,314h3v3h-3zM421,313h3v3h-3zM421,307h3v3h-3zM426,310h3v3h-3zM429,311h3v3h-3zM429,315h3v3h-3zM431,320h3v3h-3zM434,318h3v3h-3zM431,321h3v3h-3zM431,323h3v3h-3zM442,323h3v3h-3zM446,321h3v3h-3zM383,310h3v3h-3zM386,311h3v3h-3zM400,318h3v3h-3zM404,321h3v3h-3zM406,320h3v3h-3zM409,318h3v3h-3zM411,320h3v3h-3zM414,321h3v3h-3zM403,323h3v3h-3zM416,318h3v3h-3zM388,325h3v3h-3zM400,328h3v3h-3zM405,329h3v3h-3zM409,329h3v3h-3zM411,328h3v3h-3zM399,333h3v3h-3zM402,334h3v3h-3zM403,332h3v3h-3zM406,333h3v3h-3zM408,335h3v3h-3zM403,339h3v3h-3zM400,341h3v3h-3zM395,341h3v3h-3zM390,341h3v3h-3zM555,282h3v3h-3zM607,282h3v3h-3zM601,294h3v3h-3zM600,324h3v3h-3zM617,319h3v3h-3zM541,290h3v3h-3zM546,298h3v3h-3zM534,300h3v3h-3zM535,295h3v3h-3zM530,294h3v3h-3zM527,297h3v3h-3zM520,293h3v3h-3zM522,290h3v3h-3zM524,289h3v3h-3zM527,286h3v3h-3zM531,285h3v3h-3zM532,287h3v3h-3zM536,284h3v3h-3zM539,281h3v3h-3zM542,284h3v3h-3zM543,280h3v3h-3zM506,295h3v3h-3zM509,298h3v3h-3zM511,295h3v3h-3zM514,301h3v3h-3zM518,303h3v3h-3zM521,303h3v3h-3zM525,304h3v3h-3zM515,307h3v3h-3zM539,307h3v3h-3zM573,306h3v3h-3zM582,333h3v3h-3zM580,339h3v3h-3zM578,341h3v3h-3zM576,343h3v3h-3zM570,347h3v3h-3zM561,342h3v3h-3zM529,339h3v3h-3zM573,354h3v3h-3zM612,346h3v3h-3zM613,351h3v3h-3zM609,354h3v3h-3zM606,358h3v3h-3zM499,285h3v3h-3zM503,285h3v3h-3zM506,281h3v3h-3zM506,288h3v3h-3zM510,286h3v3h-3zM511,291h3v3h-3zM508,288h3v3h-3zM509,289h3v3h-3zM509,287h3v3h-3zM508,286h3v3h-3zM509,290h3v3h-3zM504,281h3v3h-3zM507,284h3v3h-3zM507,287h3v3h-3zM140,262h3v3h-3zM120,313h3v3h-3zM115,323h3v3h-3zM137,323h3v3h-3zM151,317h3v3h-3zM290,201h3v3h-3zM289,225h3v3h-3zM364,223h3v3h-3zM363,223h3v3h-3zM360,218h3v3h-3zM357,218h3v3h-3zM360,222h3v3h-3zM362,223h3v3h-3zM356,218h3v3h-3zM355,213h3v3h-3zM366,224h3v3h-3zM361,210h3v3h-3zM367,219h3v3h-3zM362,221h3v3h-3zM364,216h3v3h-3zM358,223h3v3h-3zM360,224h3v3h-3zM359,222h3v3h-3zM364,218h3v3h-3zM360,223h3v3h-3zM359,222h3v3h-3zM361,215h3v3h-3zM364,220h3v3h-3zM365,221h3v3h-3zM364,220h3v3h-3zM365,215h3v3h-3zM359,215h3v3h-3zM358,212h3v3h-3zM357,217h3v3h-3zM362,216h3v3h-3zM356,219h3v3h-3zM359,216h3v3h-3zM358,216h3v3h-3zM362,212h3v3h-3zM360,212h3v3h-3zM359,217h3v3h-3zM355,217h3v3h-3zM395,221h3v3h-3zM382,226h3v3h-3zM408,212h3v3h-3zM371,215h3v3h-3zM435,216h3v3h-3zM388,216h3v3h-3zM378,216h3v3h-3zM385,228h3v3h-3zM400,224h3v3h-3zM381,218h3v3h-3zM425,218h3v3h-3zM372,224h3v3h-3zM408,223h3v3h-3zM415,223h3v3h-3zM435,220h3v3h-3zM417,220h3v3h-3zM385,228h3v3h-3zM394,222h3v3h-3zM411,213h3v3h-3zM413,229h3v3h-3zM438,221h3v3h-3zM393,222h3v3h-3zM404,231h3v3h-3zM390,234h3v3h-3zM404,226h3v3h-3zM369,230h3v3h-3zM413,217h3v3h-3zM393,230h3v3h-3zM436,219h3v3h-3zM402,222h3v3h-3zM407,224h3v3h-3zM397,218h3v3h-3zM422,225h3v3h-3zM401,217h3v3h-3zM374,216h3v3h-3zM398,212h3v3h-3zM400,221h3v3h-3zM396,228h3v3h-3zM387,215h3v3h-3zM428,226h3v3h-3zM414,211h3v3h-3zM438,213h3v3h-3zM381,219h3v3h-3zM377,226h3v3h-3zM396,207h3v3h-3zM410,212h3v3h-3zM408,218h3v3h-3zM417,212h3v3h-3zM388,220h3v3h-3zM403,226h3v3h-3zM408,225h3v3h-3zM408,217h3v3h-3zM427,225h3v3h-3zM425,228h3v3h-3zM386,225h3v3h-3zM372,215h3v3h-3zM377,228h3v3h-3zM402,219h3v3h-3zM373,218h3v3h-3zM377,226h3v3h-3zM416,226h3v3h-3zM400,210h3v3h-3zM387,220h3v3h-3zM401,222h3v3h-3zM415,219h3v3h-3zM427,221h3v3h-3zM421,215h3v3h-3zM384,223h3v3h-3zM376,220h3v3h-3zM372,231h3v3h-3zM426,217h3v3h-3zM418,223h3v3h-3zM426,230h3v3h-3zM397,217h3v3h-3zM425,220h3v3h-3zM381,232h3v3h-3zM408,217h3v3h-3zM417,226h3v3h-3zM379,212h3v3h-3zM384,223h3v3h-3zM388,228h3v3h-3zM385,214h3v3h-3zM429,214h3v3h-3zM421,227h3v3h-3zM400,224h3v3h-3zM383,219h3v3h-3zM397,226h3v3h-3zM402,215h3v3h-3zM434,217h3v3h-3zM435,216h3v3h-3zM419,229h3v3h-3zM398,227h3v3h-3zM390,208h3v3h-3zM404,213h3v3h-3zM396,212h3v3h-3zM383,232h3v3h-3zM389,224h3v3h-3zM406,221h3v3h-3zM389,228h3v3h-3zM423,220h3v3h-3zM372,233h3v3h-3zM436,212h3v3h-3zM415,210h3v3h-3zM434,214h3v3h-3zM413,214h3v3h-3zM391,235h3v3h-3zM375,218h3v3h-3zM386,228h3v3h-3zM381,227h3v3h-3zM399,210h3v3h-3zM380,227h3v3h-3zM395,210h3v3h-3zM368,218h3v3h-3zM419,209h3v3h-3zM373,230h3v3h-3zM420,210h3v3h-3zM438,210h3v3h-3zM412,220h3v3h-3zM418,226h3v3h-3zM374,219h3v3h-3zM420,225h3v3h-3zM387,210h3v3h-3zM405,225h3v3h-3zM413,215h3v3h-3zM402,222h3v3h-3zM420,215h3v3h-3zM367,234h3v3h-3zM436,222h3v3h-3zM371,222h3v3h-3zM408,223h3v3h-3zM428,224h3v3h-3zM391,228h3v3h-3zM423,222h3v3h-3zM411,222h3v3h-3zM394,228h3v3h-3zM369,223h3v3h-3zM410,215h3v3h-3zM386,222h3v3h-3zM378,232h3v3h-3zM404,218h3v3h-3zM416,229h3v3h-3zM369,220h3v3h-3zM397,225h3v3h-3zM386,229h3v3h-3zM419,209h3v3h-3zM417,228h3v3h-3zM403,231h3v3h-3zM418,211h3v3h-3zM373,231h3v3h-3zM424,214h3v3h-3zM368,229h3v3h-3zM398,217h3v3h-3zM401,224h3v3h-3zM391,214h3v3h-3zM371,224h3v3h-3zM418,213h3v3h-3zM429,213h3v3h-3zM399,218h3v3h-3zM428,223h3v3h-3zM395,216h3v3h-3zM395,229h3v3h-3zM391,222h3v3h-3zM398,215h3v3h-3zM427,216h3v3h-3zM378,224h3v3h-3zM386,226h3v3h-3zM398,225h3v3h-3zM400,230h3v3h-3zM421,213h3v3h-3zM381,217h3v3h-3zM418,209h3v3h-3zM403,213h3v3h-3zM400,208h3v3h-3zM431,222h3v3h-3zM416,218h3v3h-3zM406,220h3v3h-3zM436,213h3v3h-3zM383,216h3v3h-3zM424,228h3v3h-3zM419,216h3v3h-3zM378,231h3v3h-3zM375,221h3v3h-3zM394,223h3v3h-3zM436,212h3v3h-3zM386,214h3v3h-3zM427,216h3v3h-3zM390,222h3v3h-3zM414,214h3v3h-3zM394,220h3v3h-3zM420,214h3v3h-3zM398,231h3v3h-3zM373,232h3v3h-3zM391,226h3v3h-3zM412,224h3v3h-3zM383,232h3v3h-3zM432,220h3v3h-3zM426,216h3v3h-3zM376,224h3v3h-3zM425,218h3v3h-3zM376,213h3v3h-3zM377,215h3v3h-3zM410,214h3v3h-3zM385,219h3v3h-3zM384,210h3v3h-3zM403,226h3v3h-3zM390,223h3v3h-3zM400,235h3v3h-3zM401,218h3v3h-3zM377,216h3v3h-3zM438,223h3v3h-3zM413,214h3v3h-3zM424,217h3v3h-3zM376,225h3v3h-3zM424,228h3v3h-3zM406,224h3v3h-3zM430,221h3v3h-3zM386,221h3v3h-3zM380,223h3v3h-3zM427,216h3v3h-3zM436,218h3v3h-3zM435,218h3v3h-3zM423,213h3v3h-3zM408,211h3v3h-3zM386,228h3v3h-3zM373,229h3v3h-3zM437,213h3v3h-3zM374,230h3v3h-3zM370,228h3v3h-3zM397,214h3v3h-3zM430,221h3v3h-3zM392,223h3v3h-3zM371,221h3v3h-3zM429,227h3v3h-3zM415,211h3v3h-3zM368,233h3v3h-3zM385,216h3v3h-3zM376,218h3v3h-3zM419,223h3v3h-3zM408,225h3v3h-3zM377,228h3v3h-3zM418,229h3v3h-3zM383,215h3v3h-3zM375,217h3v3h-3zM395,215h3v3h-3zM413,225h3v3h-3zM376,215h3v3h-3zM369,233h3v3h-3zM386,218h3v3h-3zM400,227h3v3h-3zM370,223h3v3h-3zM391,220h3v3h-3zM383,221h3v3h-3zM380,214h3v3h-3zM368,230h3v3h-3zM389,223h3v3h-3zM425,219h3v3h-3zM399,234h3v3h-3zM399,208h3v3h-3zM401,235h3v3h-3zM424,227h3v3h-3zM421,211h3v3h-3zM424,210h3v3h-3zM392,218h3v3h-3zM388,214h3v3h-3zM398,234h3v3h-3zM423,226h3v3h-3zM403,219h3v3h-3zM394,210h3v3h-3zM385,223h3v3h-3zM389,219h3v3h-3zM392,221h3v3h-3zM384,210h3v3h-3zM409,228h3v3h-3zM366,234h3v3h-3zM388,213h3v3h-3zM425,215h3v3h-3zM384,221h3v3h-3zM437,220h3v3h-3zM426,214h3v3h-3zM395,226h3v3h-3zM377,212h3v3h-3zM426,229h3v3h-3zM425,222h3v3h-3zM375,216h3v3h-3zM401,210h3v3h-3zM382,220h3v3h-3zM384,232h3v3h-3zM401,226h3v3h-3zM391,225h3v3h-3zM408,217h3v3h-3zM420,228h3v3h-3zM385,218h3v3h-3zM375,224h3v3h-3zM412,227h3v3h-3zM383,219h3v3h-3zM364,231h3v3h-3zM432,226h3v3h-3zM382,231h3v3h-3zM412,219h3v3h-3zM392,217h3v3h-3zM382,221h3v3h-3zM393,209h3v3h-3zM402,227h3v3h-3zM427,218h3v3h-3zM412,225h3v3h-3zM386,209h3v3h-3zM383,228h3v3h-3zM431,215h3v3h-3zM374,230h3v3h-3zM424,225h3v3h-3zM413,227h3v3h-3zM418,227h3v3h-3zM439,214h3v3h-3zM395,218h3v3h-3zM406,212h3v3h-3zM418,213h3v3h-3zM404,231h3v3h-3zM401,233h3v3h-3zM377,227h3v3h-3zM388,208h3v3h-3zM390,230h3v3h-3zM386,231h3v3h-3zM388,214h3v3h-3zM385,233h3v3h-3zM399,233h3v3h-3zM368,234h3v3h-3zM401,233h3v3h-3zM392,215h3v3h-3zM367,233h3v3h-3zM394,224h3v3h-3zM432,220h3v3h-3zM387,229h3v3h-3zM422,221h3v3h-3zM384,230h3v3h-3zM376,230h3v3h-3zM400,230h3v3h-3zM370,225h3v3h-3zM411,219h3v3h-3zM436,218h3v3h-3zM387,232h3v3h-3zM377,227h3v3h-3zM411,214h3v3h-3zM416,217h3v3h-3zM373,218h3v3h-3zM408,211h3v3h-3zM426,215h3v3h-3zM385,229h3v3h-3zM408,216h3v3h-3zM390,212h3v3h-3zM394,213h3v3h-3zM418,210h3v3h-3zM419,225h3v3h-3zM376,217h3v3h-3zM430,214h3v3h-3zM415,219h3v3h-3zM392,223h3v3h-3zM399,211h3v3h-3zM416,226h3v3h-3zM386,227h3v3h-3zM413,214h3v3h-3zM418,209h3v3h-3zM378,212h3v3h-3zM383,222h3v3h-3zM378,228h3v3h-3zM401,212h3v3h-3zM434,216h3v3h-3zM370,222h3v3h-3zM418,209h3v3h-3zM382,213h3v3h-3zM438,215h3v3h-3zM398,209h3v3h-3zM385,231h3v3h-3zM387,229h3v3h-3zM370,230h3v3h-3zM366,233h3v3h-3zM390,220h3v3h-3zM370,232h3v3h-3zM377,218h3v3h-3zM436,214h3v3h-3zM392,233h3v3h-3zM424,226h3v3h-3zM424,209h3v3h-3zM395,225h3v3h-3zM424,227h3v3h-3zM377,218h3v3h-3zM394,207h3v3h-3zM383,216h3v3h-3zM417,227h3v3h-3zM421,224h3v3h-3zM414,216h3v3h-3zM403,228h3v3h-3zM370,227h3v3h-3zM382,217h3v3h-3zM414,218h3v3h-3zM427,224h3v3h-3zM400,213h3v3h-3zM380,226h3v3h-3zM394,213h3v3h-3zM358,245h3v3h-3zM358,246h3v3h-3zM358,232h3v3h-3zM359,242h3v3h-3zM351,237h3v3h-3zM351,241h3v3h-3zM362,235h3v3h-3zM359,233h3v3h-3zM357,231h3v3h-3zM354,238h3v3h-3zM360,242h3v3h-3zM359,242h3v3h-3zM363,232h3v3h-3zM364,234h3v3h-3zM356,246h3v3h-3zM368,235h3v3h-3zM360,243h3v3h-3zM350,233h3v3h-3zM352,243h3v3h-3zM364,232h3v3h-3zM361,233h3v3h-3zM358,245h3v3h-3zM364,232h3v3h-3zM365,238h3v3h-3zM352,239h3v3h-3zM360,230h3v3h-3zM359,239h3v3h-3zM368,233h3v3h-3zM361,244h3v3h-3zM352,237h3v3h-3zM359,237h3v3h-3zM364,235h3v3h-3zM358,232h3v3h-3zM358,243h3v3h-3zM364,235h3v3h-3zM362,233h3v3h-3zM362,235h3v3h-3zM356,243h3v3h-3zM363,236h3v3h-3zM352,236h3v3h-3zM359,241h3v3h-3zM363,238h3v3h-3zM355,246h3v3h-3zM365,240h3v3h-3zM363,233h3v3h-3zM364,233h3v3h-3zM355,234h3v3h-3zM355,244h3v3h-3zM350,245h3v3h-3zM351,246h3v3h-3zM364,240h3v3h-3zM354,245h3v3h-3zM365,235h3v3h-3zM354,242h3v3h-3zM363,242h3v3h-3zM364,240h3v3h-3zM368,235h3v3h-3zM353,243h3v3h-3zM353,233h3v3h-3zM360,237h3v3h-3zM358,240h3v3h-3zM352,241h3v3h-3zM354,236h3v3h-3zM363,232h3v3h-3zM352,236h3v3h-3zM362,242h3v3h-3zM359,241h3v3h-3zM356,245h3v3h-3zM356,234h3v3h-3zM353,231h3v3h-3zM379,238h3v3h-3zM380,235h3v3h-3zM377,236h3v3h-3zM378,238h3v3h-3zM379,244h3v3h-3zM380,241h3v3h-3zM380,237h3v3h-3zM378,243h3v3h-3zM379,235h3v3h-3zM380,242h3v3h-3zM379,237h3v3h-3zM376,234h3v3h-3zM382,240h3v3h-3zM410,235h3v3h-3zM399,238h3v3h-3zM412,239h3v3h-3zM409,243h3v3h-3zM411,245h3v3h-3zM410,244h3v3h-3zM401,233h3v3h-3zM416,239h3v3h-3zM407,241h3v3h-3zM417,241h3v3h-3zM423,234h3v3h-3zM413,247h3v3h-3zM417,244h3v3h-3zM409,241h3v3h-3zM411,241h3v3h-3zM422,237h3v3h-3zM416,247h3v3h-3zM402,239h3v3h-3zM412,240h3v3h-3zM396,235h3v3h-3zM419,235h3v3h-3zM419,246h3v3h-3zM422,249h3v3h-3zM406,241h3v3h-3zM407,237h3v3h-3zM421,237h3v3h-3zM406,242h3v3h-3zM410,238h3v3h-3zM401,239h3v3h-3zM420,240h3v3h-3zM403,237h3v3h-3zM409,235h3v3h-3zM411,246h3v3h-3zM419,234h3v3h-3zM409,236h3v3h-3zM420,233h3v3h-3zM410,239h3v3h-3zM410,247h3v3h-3zM409,241h3v3h-3zM424,240h3v3h-3zM417,238h3v3h-3zM415,237h3v3h-3zM406,240h3v3h-3zM404,240h3v3h-3zM413,246h3v3h-3zM418,242h3v3h-3zM406,235h3v3h-3zM422,243h3v3h-3zM423,244h3v3h-3zM407,238h3v3h-3zM392,235h3v3h-3zM421,238h3v3h-3zM406,239h3v3h-3zM419,236h3v3h-3zM409,235h3v3h-3zM413,238h3v3h-3zM413,246h3v3h-3zM408,238h3v3h-3zM421,241h3v3h-3zM407,240h3v3h-3zM411,240h3v3h-3zM395,234h3v3h-3zM398,235h3v3h-3zM395,236h3v3h-3zM418,244h3v3h-3zM407,240h3v3h-3zM398,234h3v3h-3zM411,241h3v3h-3zM413,236h3v3h-3zM424,247h3v3h-3zM411,245h3v3h-3zM418,235h3v3h-3zM413,236h3v3h-3zM415,238h3v3h-3zM406,242h3v3h-3zM394,235h3v3h-3zM419,240h3v3h-3zM405,234h3v3h-3zM417,240h3v3h-3zM418,247h3v3h-3zM417,243h3v3h-3zM408,238h3v3h-3zM417,238h3v3h-3zM410,244h3v3h-3zM416,244h3v3h-3zM407,236h3v3h-3zM419,236h3v3h-3zM420,239h3v3h-3zM417,242h3v3h-3zM413,244h3v3h-3zM401,238h3v3h-3zM405,238h3v3h-3zM416,239h3v3h-3zM456,216h3v3h-3zM447,217h3v3h-3zM444,212h3v3h-3zM446,220h3v3h-3zM455,223h3v3h-3zM453,221h3v3h-3zM449,220h3v3h-3zM442,210h3v3h-3zM448,213h3v3h-3zM451,220h3v3h-3zM454,209h3v3h-3zM441,209h3v3h-3zM459,215h3v3h-3zM440,211h3v3h-3zM441,207h3v3h-3zM452,216h3v3h-3zM454,218h3v3h-3zM458,243h3v3h-3zM445,250h3v3h-3zM463,239h3v3h-3zM440,248h3v3h-3zM454,237h3v3h-3zM462,241h3v3h-3zM451,248h3v3h-3zM454,252h3v3h-3zM447,255h3v3h-3zM457,236h3v3h-3zM447,242h3v3h-3zM456,251h3v3h-3zM453,248h3v3h-3zM441,249h3v3h-3zM446,240h3v3h-3zM439,255h3v3h-3zM459,255h3v3h-3zM441,258h3v3h-3zM453,241h3v3h-3zM466,238h3v3h-3zM445,252h3v3h-3zM465,236h3v3h-3zM445,238h3v3h-3zM457,235h3v3h-3zM442,258h3v3h-3zM459,250h3v3h-3zM457,253h3v3h-3zM453,249h3v3h-3zM466,239h3v3h-3zM446,247h3v3h-3zM441,254h3v3h-3zM453,246h3v3h-3zM454,242h3v3h-3zM460,235h3v3h-3zM453,251h3v3h-3zM439,236h3v3h-3zM456,240h3v3h-3zM457,238h3v3h-3zM455,237h3v3h-3zM530,250h3v3h-3zM525,245h3v3h-3zM518,253h3v3h-3zM525,259h3v3h-3zM515,248h3v3h-3zM521,235h3v3h-3zM528,240h3v3h-3zM515,257h3v3h-3zM517,245h3v3h-3zM532,254h3v3h-3zM534,248h3v3h-3zM527,253h3v3h-3zM530,250h3v3h-3zM529,239h3v3h-3zM525,248h3v3h-3zM518,248h3v3h-3zM538,232h3v3h-3zM526,237h3v3h-3zM537,231h3v3h-3zM516,257h3v3h-3zM524,250h3v3h-3zM519,238h3v3h-3zM522,236h3v3h-3zM538,236h3v3h-3zM529,260h3v3h-3zM525,249h3v3h-3zM510,241h3v3h-3zM543,229h3v3h-3zM523,235h3v3h-3zM521,250h3v3h-3zM515,259h3v3h-3zM510,252h3v3h-3zM533,236h3v3h-3zM540,232h3v3h-3zM535,250h3v3h-3zM537,248h3v3h-3zM532,251h3v3h-3zM523,239h3v3h-3zM533,257h3v3h-3zM529,240h3v3h-3zM520,237h3v3h-3zM528,237h3v3h-3zM525,242h3v3h-3zM534,241h3v3h-3zM516,255h3v3h-3zM526,240h3v3h-3zM520,242h3v3h-3zM519,256h3v3h-3zM539,237h3v3h-3zM527,259h3v3h-3zM517,237h3v3h-3zM537,250h3v3h-3zM521,250h3v3h-3zM521,254h3v3h-3zM541,234h3v3h-3zM515,245h3v3h-3zM524,238h3v3h-3zM529,257h3v3h-3zM524,259h3v3h-3zM551,227h3v3h-3zM543,228h3v3h-3zM530,233h3v3h-3zM546,230h3v3h-3zM543,235h3v3h-3zM529,256h3v3h-3zM530,252h3v3h-3zM523,238h3v3h-3zM520,251h3v3h-3zM518,261h3v3h-3zM547,234h3v3h-3zM514,250h3v3h-3zM530,249h3v3h-3zM511,251h3v3h-3zM528,233h3v3h-3zM515,261h3v3h-3zM530,243h3v3h-3zM522,253h3v3h-3zM524,254h3v3h-3zM521,258h3v3h-3zM522,236h3v3h-3zM537,240h3v3h-3zM519,254h3v3h-3zM526,246h3v3h-3zM531,247h3v3h-3zM536,238h3v3h-3zM537,230h3v3h-3zM546,230h3v3h-3zM548,233h3v3h-3zM540,235h3v3h-3zM525,249h3v3h-3zM518,245h3v3h-3zM549,228h3v3h-3zM545,228h3v3h-3zM527,240h3v3h-3zM513,254h3v3h-3zM533,233h3v3h-3zM532,235h3v3h-3zM537,232h3v3h-3zM513,251h3v3h-3zM525,243h3v3h-3zM527,239h3v3h-3zM529,239h3v3h-3zM523,240h3v3h-3zM534,234h3v3h-3zM520,264h3v3h-3zM529,241h3v3h-3zM535,246h3v3h-3zM522,234h3v3h-3zM547,226h3v3h-3zM521,247h3v3h-3zM525,248h3v3h-3zM519,258h3v3h-3zM513,241h3v3h-3zM516,258h3v3h-3zM522,254h3v3h-3zM511,256h3v3h-3zM524,258h3v3h-3zM527,260h3v3h-3zM548,234h3v3h-3zM526,237h3v3h-3zM515,245h3v3h-3zM529,249h3v3h-3zM531,234h3v3h-3zM522,241h3v3h-3zM531,256h3v3h-3zM534,245h3v3h-3zM538,233h3v3h-3zM536,255h3v3h-3zM550,229h3v3h-3zM524,238h3v3h-3zM518,240h3v3h-3zM509,253h3v3h-3zM514,243h3v3h-3zM533,233h3v3h-3zM532,236h3v3h-3zM530,254h3v3h-3zM515,253h3v3h-3zM516,237h3v3h-3zM511,251h3v3h-3zM509,241h3v3h-3zM521,259h3v3h-3zM538,234h3v3h-3zM513,238h3v3h-3zM517,245h3v3h-3zM532,239h3v3h-3zM524,239h3v3h-3zM537,235h3v3h-3zM545,226h3v3h-3zM534,236h3v3h-3zM516,261h3v3h-3zM438,240h3v3h-3zM435,250h3v3h-3zM416,243h3v3h-3zM450,245h3v3h-3zM432,243h3v3h-3zM411,248h3v3h-3zM445,254h3v3h-3zM431,241h3v3h-3zM451,244h3v3h-3zM410,244h3v3h-3zM449,251h3v3h-3zM443,254h3v3h-3zM425,246h3v3h-3zM450,255h3v3h-3zM409,242h3v3h-3zM443,249h3v3h-3zM418,249h3v3h-3zM416,243h3v3h-3zM439,245h3v3h-3zM439,247h3v3h-3zM430,249h3v3h-3zM440,245h3v3h-3zM447,247h3v3h-3zM411,242h3v3h-3zM429,245h3v3h-3zM427,243h3v3h-3zM442,245h3v3h-3zM442,249h3v3h-3zM444,248h3v3h-3zM430,246h3v3h-3zM441,248h3v3h-3zM430,250h3v3h-3zM407,244h3v3h-3zM424,244h3v3h-3zM446,247h3v3h-3zM426,249h3v3h-3zM452,251h3v3h-3zM411,246h3v3h-3zM427,242h3v3h-3zM434,251h3v3h-3zM414,247h3v3h-3zM450,253h3v3h-3zM441,241h3v3h-3zM410,247h3v3h-3zM271,248h3v3h-3zM254,258h3v3h-3zM244,278h3v3h-3zM250,280h3v3h-3zM281,283h3v3h-3zM285,284h3v3h-3zM289,286h3v3h-3zM292,294h3v3h-3zM296,294h3v3h-3zM277,297h3v3h-3zM286,297h3v3h-3zM272,305h3v3h-3zM267,307h3v3h-3zM259,299h3v3h-3zM208,260h3v3h-3zM205,235h3v3h-3zM214,235h3v3h-3zM214,238h3v3h-3zM201,241h3v3h-3zM213,243h3v3h-3zM219,241h3v3h-3zM219,246h3v3h-3zM213,248h3v3h-3zM239,240h3v3h-3zM240,246h3v3h-3zM245,250h3v3h-3zM239,237h3v3h-3zM247,243h3v3h-3zM230,248h3v3h-3zM231,245h3v3h-3zM241,236h3v3h-3zM255,239h3v3h-3zM250,232h3v3h-3zM229,233h3v3h-3zM249,235h3v3h-3zM243,248h3v3h-3zM246,229h3v3h-3zM260,234h3v3h-3zM248,239h3v3h-3zM241,231h3v3h-3zM248,234h3v3h-3zM246,243h3v3h-3zM247,247h3v3h-3zM251,230h3v3h-3zM258,236h3v3h-3zM262,230h3v3h-3zM241,233h3v3h-3zM251,242h3v3h-3zM252,242h3v3h-3zM256,233h3v3h-3zM243,242h3v3h-3zM262,231h3v3h-3zM236,237h3v3h-3zM239,230h3v3h-3zM241,241h3v3h-3zM236,232h3v3h-3zM252,235h3v3h-3zM245,240h3v3h-3zM252,242h3v3h-3zM228,245h3v3h-3zM244,244h3v3h-3zM236,242h3v3h-3zM237,240h3v3h-3zM229,241h3v3h-3zM245,243h3v3h-3zM244,233h3v3h-3zM249,244h3v3h-3zM264,229h3v3h-3zM225,243h3v3h-3zM229,247h3v3h-3zM241,236h3v3h-3zM247,243h3v3h-3zM235,246h3v3h-3zM236,240h3v3h-3zM237,229h3v3h-3zM252,236h3v3h-3zM254,242h3v3h-3zM237,236h3v3h-3zM257,243h3v3h-3zM244,243h3v3h-3zM238,246h3v3h-3zM241,245h3v3h-3zM258,236h3v3h-3zM254,236h3v3h-3zM246,234h3v3h-3zM252,246h3v3h-3zM260,237h3v3h-3zM264,235h3v3h-3zM250,247h3v3h-3zM247,237h3v3h-3zM248,248h3v3h-3zM255,244h3v3h-3zM237,230h3v3h-3zM241,240h3v3h-3zM234,239h3v3h-3zM263,234h3v3h-3zM236,231h3v3h-3zM225,240h3v3h-3zM244,233h3v3h-3zM245,246h3v3h-3zM230,248h3v3h-3zM252,232h3v3h-3zM254,239h3v3h-3zM253,240h3v3h-3zM252,242h3v3h-3zM227,239h3v3h-3zM226,240h3v3h-3zM251,236h3v3h-3zM248,236h3v3h-3zM260,236h3v3h-3zM232,235h3v3h-3zM237,239h3v3h-3zM229,232h3v3h-3zM235,229h3v3h-3zM249,240h3v3h-3zM232,237h3v3h-3zM237,232h3v3h-3zM253,235h3v3h-3zM234,231h3v3h-3zM249,236h3v3h-3zM242,232h3v3h-3zM243,244h3v3h-3zM241,233h3v3h-3zM248,242h3v3h-3zM249,236h3v3h-3zM251,241h3v3h-3zM243,232h3v3h-3zM243,239h3v3h-3zM252,244h3v3h-3zM243,234h3v3h-3zM233,248h3v3h-3zM240,244h3v3h-3zM251,246h3v3h-3zM260,239h3v3h-3zM225,239h3v3h-3zM238,239h3v3h-3zM231,246h3v3h-3zM249,232h3v3h-3zM228,247h3v3h-3zM257,236h3v3h-3zM250,246h3v3h-3zM246,238h3v3h-3zM241,243h3v3h-3zM240,236h3v3h-3zM257,242h3v3h-3zM256,238h3v3h-3zM256,241h3v3h-3zM234,243h3v3h-3zM247,240h3v3h-3zM248,239h3v3h-3zM247,247h3v3h-3zM231,250h3v3h-3zM239,240h3v3h-3zM251,231h3v3h-3zM230,241h3v3h-3zM240,242h3v3h-3zM190,241h3v3h-3zM205,253h3v3h-3zM196,241h3v3h-3zM195,243h3v3h-3zM199,249h3v3h-3zM190,236h3v3h-3zM195,238h3v3h-3zM200,247h3v3h-3zM191,235h3v3h-3zM190,240h3v3h-3zM190,238h3v3h-3zM189,237h3v3h-3zM191,243h3v3h-3zM206,253h3v3h-3zM194,240h3v3h-3zM203,250h3v3h-3zM192,240h3v3h-3zM240,277h3v3h-3zM235,273h3v3h-3zM234,270h3v3h-3zM237,274h3v3h-3zM234,270h3v3h-3zM239,271h3v3h-3zM258,265h3v3h-3zM257,264h3v3h-3zM250,263h3v3h-3zM256,266h3v3h-3zM255,264h3v3h-3zM256,263h3v3h-3zM255,265h3v3h-3zM249,261h3v3h-3zM267,268h3v3h-3zM266,266h3v3h-3zM261,267h3v3h-3zM277,271h3v3h-3zM276,272h3v3h-3zM279,273h3v3h-3zM276,273h3v3h-3zM226,271h3v3h-3zM206,251h3v3h-3zM216,267h3v3h-3zM222,252h3v3h-3zM226,268h3v3h-3zM209,260h3v3h-3zM234,267h3v3h-3zM227,256h3v3h-3zM220,265h3v3h-3zM225,259h3v3h-3zM227,267h3v3h-3zM205,252h3v3h-3zM234,267h3v3h-3zM212,260h3v3h-3zM205,254h3v3h-3zM209,257h3v3h-3zM230,272h3v3h-3zM221,256h3v3h-3zM234,267h3v3h-3zM217,253h3v3h-3zM213,259h3v3h-3zM223,270h3v3h-3zM222,257h3v3h-3zM227,267h3v3h-3zM228,263h3v3h-3zM231,266h3v3h-3zM214,256h3v3h-3zM226,270h3v3h-3zM222,267h3v3h-3zM222,268h3v3h-3zM214,262h3v3h-3zM216,264h3v3h-3zM208,260h3v3h-3zM216,265h3v3h-3zM233,269h3v3h-3zM220,267h3v3h-3zM219,259h3v3h-3zM228,269h3v3h-3zM221,254h3v3h-3zM234,267h3v3h-3zM218,263h3v3h-3zM218,252h3v3h-3zM209,260h3v3h-3zM218,254h3v3h-3zM207,256h3v3h-3zM223,261h3v3h-3zM216,263h3v3h-3zM234,271h3v3h-3zM234,271h3v3h-3zM215,265h3v3h-3zM223,269h3v3h-3zM224,263h3v3h-3zM218,259h3v3h-3zM218,264h3v3h-3zM217,262h3v3h-3zM230,269h3v3h-3zM221,255h3v3h-3zM211,254h3v3h-3zM218,259h3v3h-3zM240,269h3v3h-3zM230,264h3v3h-3zM211,254h3v3h-3zM207,256h3v3h-3zM210,254h3v3h-3zM212,262h3v3h-3zM206,256h3v3h-3zM218,257h3v3h-3zM220,260h3v3h-3zM210,259h3v3h-3zM232,272h3v3h-3zM217,265h3v3h-3zM222,255h3v3h-3zM226,270h3v3h-3zM221,265h3v3h-3zM232,270h3v3h-3zM210,261h3v3h-3zM216,258h3v3h-3zM225,259h3v3h-3zM217,263h3v3h-3zM239,270h3v3h-3zM247,250h3v3h-3zM247,251h3v3h-3zM250,253h3v3h-3zM246,253h3v3h-3zM248,254h3v3h-3zM256,278h3v3h-3zM261,283h3v3h-3zM253,286h3v3h-3zM272,279h3v3h-3zM266,281h3v3h-3zM262,282h3v3h-3zM269,278h3v3h-3zM255,279h3v3h-3zM269,277h3v3h-3zM272,277h3v3h-3zM254,279h3v3h-3zM256,279h3v3h-3zM261,279h3v3h-3zM257,276h3v3h-3zM269,279h3v3h-3zM255,283h3v3h-3zM265,280h3v3h-3zM264,280h3v3h-3zM256,278h3v3h-3zM257,287h3v3h-3zM255,281h3v3h-3zM254,286h3v3h-3zM260,280h3v3h-3zM253,286h3v3h-3zM256,278h3v3h-3zM255,277h3v3h-3zM254,285h3v3h-3zM254,277h3v3h-3zM258,276h3v3h-3zM257,280h3v3h-3zM255,287h3v3h-3zM261,277h3v3h-3zM258,283h3v3h-3zM250,300h3v3h-3zM249,293h3v3h-3zM251,294h3v3h-3zM251,299h3v3h-3zM255,298h3v3h-3zM252,296h3v3h-3zM251,293h3v3h-3zM250,291h3v3h-3zM249,295h3v3h-3zM250,295h3v3h-3zM254,295h3v3h-3zM253,303h3v3h-3zM254,291h3v3h-3zM253,302h3v3h-3zM250,292h3v3h-3zM253,301h3v3h-3zM255,309h3v3h-3zM253,301h3v3h-3zM253,299h3v3h-3zM251,304h3v3h-3zM250,294h3v3h-3zM254,302h3v3h-3zM221,248h3v3h-3zM214,243h3v3h-3zM209,242h3v3h-3zM223,244h3v3h-3zM224,234h3v3h-3zM221,239h3v3h-3zM211,237h3v3h-3zM225,240h3v3h-3zM215,247h3v3h-3zM214,236h3v3h-3zM214,239h3v3h-3zM206,241h3v3h-3zM225,236h3v3h-3zM222,239h3v3h-3zM208,243h3v3h-3zM217,232h3v3h-3zM221,242h3v3h-3zM221,241h3v3h-3zM216,246h3v3h-3zM217,237h3v3h-3zM217,248h3v3h-3zM220,237h3v3h-3zM225,237h3v3h-3zM223,231h3v3h-3zM226,236h3v3h-3z" fill="#cb4444"/><path d="M151,206h1v1h-1zM204,217h1v1h-1zM202,221h1v1h-1zM213,219h1v1h-1zM217,222h1v1h-1zM227,222h1v1h-1zM190,224h1v1h-1zM194,227h1v1h-1zM197,226h1v1h-1zM190,231h1v1h-1zM222,227h1v1h-1zM233,227h1v1h-1zM238,226h1v1h-1zM232,230h1v1h-1zM227,232h1v1h-1zM263,227h1v1h-1zM206,235h1v1h-1zM215,235h1v1h-1zM215,239h1v1h-1zM202,242h1v1h-1zM214,244h1v1h-1zM213,248h1v1h-1zM219,241h1v1h-1zM219,245h1v1h-1zM220,248h1v1h-1zM223,247h1v1h-1zM255,259h1v1h-1zM208,261h1v1h-1zM241,264h1v1h-1zM237,265h1v1h-1zM246,262h1v1h-1zM256,268h1v1h-1zM237,265h1v1h-1zM241,264h1v1h-1zM246,262h1v1h-1zM249,261h1v1h-1zM252,262h1v1h-1zM256,264h1v1h-1zM257,266h1v1h-1zM256,269h1v1h-1zM261,267h1v1h-1zM264,267h1v1h-1zM267,268h1v1h-1zM270,268h1v1h-1zM276,269h1v1h-1zM277,272h1v1h-1zM278,275h1v1h-1zM280,276h1v1h-1zM276,279h1v1h-1zM246,279h1v1h-1zM252,281h1v1h-1zM282,284h1v1h-1zM287,286h1v1h-1zM290,286h1v1h-1zM292,294h1v1h-1zM297,296h1v1h-1zM298,295h1v1h-1zM302,297h1v1h-1zM296,302h1v1h-1zM297,304h1v1h-1zM304,301h1v1h-1zM307,300h1v1h-1zM310,300h1v1h-1zM315,303h1v1h-1zM313,307h1v1h-1zM310,304h1v1h-1zM307,307h1v1h-1zM311,311h1v1h-1zM308,314h1v1h-1zM305,315h1v1h-1zM300,311h1v1h-1zM287,297h1v1h-1zM279,299h1v1h-1zM260,300h1v1h-1zM269,309h1v1h-1zM274,307h1v1h-1zM262,314h1v1h-1zM285,317h1v1h-1zM288,317h1v1h-1zM303,317h1v1h-1zM331,272h1v1h-1zM343,269h1v1h-1zM341,272h1v1h-1zM342,276h1v1h-1zM346,281h1v1h-1zM349,284h1v1h-1zM264,317h1v1h-1zM267,317h1v1h-1zM271,319h1v1h-1zM274,320h1v1h-1zM265,321h1v1h-1zM266,325h1v1h-1zM270,322h1v1h-1zM272,325h1v1h-1zM265,328h1v1h-1zM264,332h1v1h-1zM271,328h1v1h-1zM272,333h1v1h-1zM267,335h1v1h-1zM264,336h1v1h-1zM275,337h1v1h-1zM277,338h1v1h-1zM281,335h1v1h-1zM282,331h1v1h-1zM291,321h1v1h-1zM290,328h1v1h-1zM300,329h1v1h-1zM290,330h1v1h-1zM293,320h1v1h-1zM307,324h1v1h-1zM293,329h1v1h-1zM290,323h1v1h-1zM299,325h1v1h-1zM293,321h1v1h-1zM291,339h1v1h-1zM289,334h1v1h-1zM289,325h1v1h-1zM298,332h1v1h-1zM292,322h1v1h-1zM290,339h1v1h-1zM305,324h1v1h-1zM300,326h1v1h-1zM291,322h1v1h-1zM298,322h1v1h-1zM294,321h1v1h-1zM287,331h1v1h-1zM303,326h1v1h-1zM285,333h1v1h-1zM300,329h1v1h-1zM291,331h1v1h-1zM287,326h1v1h-1zM305,322h1v1h-1zM296,320h1v1h-1zM292,331h1v1h-1zM299,320h1v1h-1zM287,328h1v1h-1zM286,334h1v1h-1zM302,319h1v1h-1zM296,329h1v1h-1zM291,337h1v1h-1zM295,321h1v1h-1zM289,324h1v1h-1zM295,328h1v1h-1zM293,330h1v1h-1zM286,331h1v1h-1zM290,338h1v1h-1zM290,332h1v1h-1zM296,335h1v1h-1zM303,321h1v1h-1zM287,326h1v1h-1zM295,327h1v1h-1zM294,324h1v1h-1zM305,322h1v1h-1zM289,327h1v1h-1zM294,323h1v1h-1zM291,338h1v1h-1zM297,317h1v1h-1zM304,320h1v1h-1zM296,321h1v1h-1zM291,335h1v1h-1zM295,326h1v1h-1zM286,330h1v1h-1zM288,339h1v1h-1zM305,322h1v1h-1zM298,331h1v1h-1zM294,330h1v1h-1zM289,333h1v1h-1zM290,326h1v1h-1zM300,323h1v1h-1zM292,334h1v1h-1zM286,327h1v1h-1zM291,338h1v1h-1zM293,320h1v1h-1zM304,323h1v1h-1zM287,329h1v1h-1zM291,331h1v1h-1zM301,321h1v1h-1zM299,322h1v1h-1zM295,323h1v1h-1zM264,332h1v1h-1zM264,336h1v1h-1zM272,332h1v1h-1zM270,336h1v1h-1zM267,339h1v1h-1zM274,339h1v1h-1zM277,339h1v1h-1zM281,333h1v1h-1zM282,336h1v1h-1zM285,332h1v1h-1zM289,336h1v1h-1zM291,339h1v1h-1zM282,339h1v1h-1zM281,343h1v1h-1zM285,343h1v1h-1zM264,342h1v1h-1zM266,342h1v1h-1zM262,346h1v1h-1zM260,350h1v1h-1zM262,353h1v1h-1zM269,349h1v1h-1zM277,349h1v1h-1zM284,348h1v1h-1zM272,356h1v1h-1zM269,359h1v1h-1zM263,370h1v1h-1zM283,367h1v1h-1zM271,341h1v1h-1zM275,341h1v1h-1zM279,341h1v1h-1zM294,332h1v1h-1zM295,334h1v1h-1zM292,330h1v1h-1zM296,334h1v1h-1zM296,334h1v1h-1zM289,331h1v1h-1zM290,337h1v1h-1zM296,332h1v1h-1zM290,331h1v1h-1zM291,335h1v1h-1zM291,337h1v1h-1zM295,332h1v1h-1zM266,341h1v1h-1zM262,351h1v1h-1zM263,344h1v1h-1zM266,343h1v1h-1zM262,352h1v1h-1zM267,344h1v1h-1zM265,345h1v1h-1zM267,342h1v1h-1zM267,342h1v1h-1zM267,344h1v1h-1zM261,346h1v1h-1zM265,344h1v1h-1zM264,347h1v1h-1zM263,348h1v1h-1zM262,350h1v1h-1zM412,196h1v1h-1zM402,201h1v1h-1zM393,203h1v1h-1zM379,203h1v1h-1zM422,202h1v1h-1zM441,204h1v1h-1zM437,207h1v1h-1zM413,206h1v1h-1zM408,209h1v1h-1zM372,209h1v1h-1zM380,209h1v1h-1zM333,203h1v1h-1zM352,220h1v1h-1zM359,225h1v1h-1zM433,227h1v1h-1zM438,227h1v1h-1zM370,242h1v1h-1zM341,247h1v1h-1zM384,247h1v1h-1zM400,243h1v1h-1zM490,196h1v1h-1zM469,206h1v1h-1zM474,207h1v1h-1zM451,210h1v1h-1zM458,212h1v1h-1zM454,214h1v1h-1zM452,217h1v1h-1zM456,218h1v1h-1zM458,215h1v1h-1zM464,215h1v1h-1zM463,219h1v1h-1zM469,215h1v1h-1zM466,221h1v1h-1zM469,223h1v1h-1zM472,220h1v1h-1zM475,219h1v1h-1zM480,220h1v1h-1zM479,222h1v1h-1zM482,223h1v1h-1zM484,215h1v1h-1zM486,214h1v1h-1zM485,217h1v1h-1zM487,219h1v1h-1zM490,217h1v1h-1zM494,214h1v1h-1zM497,214h1v1h-1zM495,218h1v1h-1zM502,214h1v1h-1zM509,214h1v1h-1zM512,211h1v1h-1zM512,219h1v1h-1zM513,219h1v1h-1zM518,220h1v1h-1zM527,220h1v1h-1zM517,225h1v1h-1zM480,232h1v1h-1zM485,230h1v1h-1zM490,232h1v1h-1zM471,232h1v1h-1zM474,232h1v1h-1zM550,205h1v1h-1zM546,222h1v1h-1zM560,221h1v1h-1zM568,227h1v1h-1zM504,238h1v1h-1zM450,249h1v1h-1zM464,245h1v1h-1zM469,244h1v1h-1zM467,238h1v1h-1zM458,247h1v1h-1zM469,238h1v1h-1zM458,240h1v1h-1zM461,238h1v1h-1zM453,240h1v1h-1zM458,242h1v1h-1zM450,237h1v1h-1zM461,243h1v1h-1zM467,241h1v1h-1zM462,236h1v1h-1zM462,248h1v1h-1zM452,241h1v1h-1zM467,238h1v1h-1zM471,246h1v1h-1zM468,236h1v1h-1zM456,241h1v1h-1zM461,243h1v1h-1zM455,245h1v1h-1zM463,237h1v1h-1zM470,246h1v1h-1zM453,240h1v1h-1zM455,249h1v1h-1zM464,233h1v1h-1zM457,247h1v1h-1zM462,247h1v1h-1zM467,250h1v1h-1zM466,249h1v1h-1zM469,241h1v1h-1zM472,242h1v1h-1zM473,245h1v1h-1zM462,237h1v1h-1zM456,244h1v1h-1zM470,242h1v1h-1zM466,237h1v1h-1zM452,237h1v1h-1zM457,238h1v1h-1zM464,235h1v1h-1zM456,245h1v1h-1zM461,242h1v1h-1zM461,236h1v1h-1zM461,248h1v1h-1zM465,245h1v1h-1zM472,246h1v1h-1zM459,246h1v1h-1zM472,249h1v1h-1zM461,246h1v1h-1zM464,243h1v1h-1zM456,236h1v1h-1zM459,244h1v1h-1zM461,235h1v1h-1zM462,235h1v1h-1zM460,242h1v1h-1zM451,244h1v1h-1zM454,240h1v1h-1zM451,239h1v1h-1zM456,238h1v1h-1zM470,239h1v1h-1zM549,246h1v1h-1zM546,240h1v1h-1zM549,246h1v1h-1zM549,245h1v1h-1zM548,241h1v1h-1zM549,245h1v1h-1zM559,242h1v1h-1zM569,236h1v1h-1zM565,241h1v1h-1zM555,244h1v1h-1zM568,240h1v1h-1zM566,235h1v1h-1zM565,237h1v1h-1zM558,245h1v1h-1zM562,238h1v1h-1zM561,243h1v1h-1zM558,245h1v1h-1zM568,233h1v1h-1zM561,241h1v1h-1zM568,232h1v1h-1zM557,244h1v1h-1zM559,246h1v1h-1zM561,244h1v1h-1zM565,241h1v1h-1zM562,244h1v1h-1zM565,235h1v1h-1zM549,205h1v1h-1zM580,210h1v1h-1zM590,219h1v1h-1zM526,220h1v1h-1zM546,222h1v1h-1zM560,221h1v1h-1zM568,228h1v1h-1zM548,230h1v1h-1zM547,230h1v1h-1zM550,228h1v1h-1zM550,228h1v1h-1zM547,233h1v1h-1zM541,227h1v1h-1zM546,233h1v1h-1zM541,227h1v1h-1zM547,228h1v1h-1zM550,226h1v1h-1zM553,230h1v1h-1zM553,231h1v1h-1zM546,230h1v1h-1zM554,230h1v1h-1zM552,229h1v1h-1zM539,232h1v1h-1zM547,228h1v1h-1zM551,232h1v1h-1zM551,227h1v1h-1zM547,230h1v1h-1zM545,234h1v1h-1zM548,232h1v1h-1zM566,238h1v1h-1zM568,231h1v1h-1zM567,240h1v1h-1zM565,242h1v1h-1zM553,247h1v1h-1zM565,234h1v1h-1zM561,241h1v1h-1zM570,233h1v1h-1zM563,241h1v1h-1zM557,246h1v1h-1zM558,247h1v1h-1zM567,233h1v1h-1zM560,242h1v1h-1zM554,247h1v1h-1zM566,239h1v1h-1zM557,244h1v1h-1zM557,244h1v1h-1zM562,244h1v1h-1zM545,240h1v1h-1zM546,239h1v1h-1zM546,240h1v1h-1zM546,242h1v1h-1zM546,240h1v1h-1zM341,247h1v1h-1zM342,253h1v1h-1zM346,256h1v1h-1zM384,248h1v1h-1zM400,243h1v1h-1zM370,241h1v1h-1zM332,273h1v1h-1zM342,268h1v1h-1zM341,273h1v1h-1zM342,277h1v1h-1zM346,281h1v1h-1zM349,284h1v1h-1zM351,273h1v1h-1zM360,270h1v1h-1zM364,270h1v1h-1zM369,274h1v1h-1zM376,270h1v1h-1zM397,274h1v1h-1zM401,275h1v1h-1zM405,284h1v1h-1zM410,287h1v1h-1zM392,287h1v1h-1zM393,290h1v1h-1zM390,294h1v1h-1zM400,294h1v1h-1zM402,299h1v1h-1zM404,290h1v1h-1zM375,294h1v1h-1zM379,294h1v1h-1zM382,301h1v1h-1zM384,302h1v1h-1zM384,307h1v1h-1zM385,312h1v1h-1zM387,312h1v1h-1zM390,298h1v1h-1zM393,301h1v1h-1zM398,302h1v1h-1zM401,307h1v1h-1zM405,310h1v1h-1zM406,315h1v1h-1zM417,254h1v1h-1zM421,259h1v1h-1zM421,264h1v1h-1zM417,267h1v1h-1zM413,269h1v1h-1zM411,272h1v1h-1zM416,272h1v1h-1zM421,274h1v1h-1zM426,272h1v1h-1zM430,275h1v1h-1zM435,274h1v1h-1zM425,280h1v1h-1zM428,281h1v1h-1zM415,282h1v1h-1zM418,284h1v1h-1zM430,291h1v1h-1zM426,294h1v1h-1zM416,302h1v1h-1zM422,308h1v1h-1zM427,311h1v1h-1zM430,312h1v1h-1zM432,318h1v1h-1zM415,315h1v1h-1zM420,315h1v1h-1zM415,307h1v1h-1zM356,316h1v1h-1zM431,258h1v1h-1zM436,257h1v1h-1zM354,247h1v1h-1zM360,242h1v1h-1zM363,240h1v1h-1zM363,244h1v1h-1zM359,245h1v1h-1zM362,244h1v1h-1zM361,242h1v1h-1zM356,247h1v1h-1zM381,245h1v1h-1zM380,242h1v1h-1zM379,285h1v1h-1zM356,283h1v1h-1zM380,279h1v1h-1zM357,283h1v1h-1zM384,280h1v1h-1zM378,287h1v1h-1zM355,285h1v1h-1zM364,278h1v1h-1zM359,281h1v1h-1zM373,285h1v1h-1zM384,282h1v1h-1zM359,280h1v1h-1zM363,276h1v1h-1zM359,280h1v1h-1zM366,282h1v1h-1zM376,279h1v1h-1zM362,286h1v1h-1zM361,279h1v1h-1zM370,276h1v1h-1zM374,282h1v1h-1zM363,282h1v1h-1zM378,284h1v1h-1zM355,282h1v1h-1zM364,285h1v1h-1zM375,278h1v1h-1zM376,282h1v1h-1zM377,284h1v1h-1zM377,286h1v1h-1zM376,287h1v1h-1zM376,277h1v1h-1zM369,282h1v1h-1zM379,274h1v1h-1zM364,284h1v1h-1zM360,275h1v1h-1zM383,277h1v1h-1zM382,280h1v1h-1zM382,284h1v1h-1zM379,288h1v1h-1zM366,285h1v1h-1zM354,281h1v1h-1zM370,283h1v1h-1zM377,282h1v1h-1zM357,276h1v1h-1zM364,279h1v1h-1zM410,298h1v1h-1zM407,297h1v1h-1zM416,301h1v1h-1zM418,293h1v1h-1zM412,292h1v1h-1zM413,297h1v1h-1zM411,297h1v1h-1zM411,296h1v1h-1zM408,293h1v1h-1zM419,297h1v1h-1zM416,300h1v1h-1zM418,294h1v1h-1zM407,299h1v1h-1zM408,294h1v1h-1zM420,296h1v1h-1zM407,293h1v1h-1zM409,293h1v1h-1zM409,295h1v1h-1zM408,292h1v1h-1zM418,298h1v1h-1zM449,234h1v1h-1zM485,229h1v1h-1zM489,231h1v1h-1zM480,231h1v1h-1zM505,237h1v1h-1zM517,225h1v1h-1zM546,222h1v1h-1zM546,256h1v1h-1zM538,259h1v1h-1zM497,277h1v1h-1zM470,288h1v1h-1zM556,283h1v1h-1zM542,292h1v1h-1zM521,292h1v1h-1zM536,295h1v1h-1zM507,295h1v1h-1zM515,298h1v1h-1zM468,222h1v1h-1zM480,222h1v1h-1zM445,222h1v1h-1zM517,221h1v1h-1zM489,264h1v1h-1zM481,263h1v1h-1zM479,261h1v1h-1zM487,264h1v1h-1zM464,256h1v1h-1zM485,267h1v1h-1zM481,263h1v1h-1zM488,253h1v1h-1zM478,254h1v1h-1zM474,263h1v1h-1zM477,271h1v1h-1zM475,251h1v1h-1zM483,267h1v1h-1zM473,250h1v1h-1zM474,271h1v1h-1zM484,259h1v1h-1zM483,253h1v1h-1zM486,254h1v1h-1zM475,275h1v1h-1zM471,252h1v1h-1zM487,257h1v1h-1zM476,251h1v1h-1zM489,253h1v1h-1zM477,258h1v1h-1zM475,274h1v1h-1zM464,247h1v1h-1zM486,256h1v1h-1zM486,264h1v1h-1zM478,256h1v1h-1zM477,256h1v1h-1zM486,264h1v1h-1zM476,269h1v1h-1zM469,250h1v1h-1zM471,258h1v1h-1zM468,260h1v1h-1zM487,265h1v1h-1zM463,246h1v1h-1zM483,268h1v1h-1zM488,262h1v1h-1zM465,246h1v1h-1zM473,277h1v1h-1zM493,255h1v1h-1zM483,266h1v1h-1zM476,257h1v1h-1zM474,258h1v1h-1zM467,265h1v1h-1zM495,259h1v1h-1zM492,254h1v1h-1zM467,253h1v1h-1zM478,282h1v1h-1zM472,256h1v1h-1zM473,263h1v1h-1zM480,263h1v1h-1zM473,264h1v1h-1zM467,247h1v1h-1zM474,273h1v1h-1zM470,262h1v1h-1zM478,266h1v1h-1zM467,260h1v1h-1zM472,261h1v1h-1zM474,269h1v1h-1zM464,249h1v1h-1zM486,256h1v1h-1zM474,268h1v1h-1zM466,259h1v1h-1zM476,269h1v1h-1zM496,257h1v1h-1zM475,276h1v1h-1zM485,262h1v1h-1zM475,259h1v1h-1zM468,253h1v1h-1zM470,250h1v1h-1zM475,251h1v1h-1zM478,261h1v1h-1zM486,254h1v1h-1zM478,256h1v1h-1zM489,263h1v1h-1zM481,257h1v1h-1zM492,260h1v1h-1zM478,256h1v1h-1zM475,266h1v1h-1zM470,270h1v1h-1zM493,256h1v1h-1zM490,256h1v1h-1zM477,283h1v1h-1zM469,263h1v1h-1zM466,256h1v1h-1zM464,255h1v1h-1zM465,256h1v1h-1zM477,277h1v1h-1zM470,251h1v1h-1zM477,269h1v1h-1zM470,261h1v1h-1zM481,265h1v1h-1zM476,264h1v1h-1zM491,259h1v1h-1zM479,273h1v1h-1zM478,257h1v1h-1zM463,253h1v1h-1zM481,255h1v1h-1zM474,276h1v1h-1zM493,258h1v1h-1zM466,260h1v1h-1zM495,260h1v1h-1zM480,282h1v1h-1zM482,258h1v1h-1zM473,269h1v1h-1zM477,272h1v1h-1zM494,259h1v1h-1zM475,277h1v1h-1zM475,260h1v1h-1zM482,269h1v1h-1zM475,275h1v1h-1zM483,266h1v1h-1zM476,271h1v1h-1zM470,249h1v1h-1zM476,267h1v1h-1zM471,255h1v1h-1zM493,263h1v1h-1zM493,258h1v1h-1zM466,253h1v1h-1zM475,277h1v1h-1zM482,269h1v1h-1zM464,257h1v1h-1zM478,272h1v1h-1zM474,280h1v1h-1zM477,281h1v1h-1zM463,250h1v1h-1zM467,251h1v1h-1zM473,273h1v1h-1zM471,270h1v1h-1zM472,266h1v1h-1zM462,247h1v1h-1zM477,270h1v1h-1zM480,270h1v1h-1zM479,277h1v1h-1zM487,257h1v1h-1zM464,247h1v1h-1zM478,264h1v1h-1zM473,274h1v1h-1zM475,267h1v1h-1zM473,263h1v1h-1zM502,263h1v1h-1zM497,264h1v1h-1zM499,265h1v1h-1zM511,265h1v1h-1zM516,269h1v1h-1zM509,269h1v1h-1zM521,269h1v1h-1zM513,268h1v1h-1zM515,275h1v1h-1zM505,267h1v1h-1zM517,265h1v1h-1zM520,275h1v1h-1zM499,265h1v1h-1zM508,268h1v1h-1zM511,270h1v1h-1zM515,264h1v1h-1zM522,271h1v1h-1zM517,274h1v1h-1zM516,276h1v1h-1zM511,274h1v1h-1zM512,272h1v1h-1zM499,262h1v1h-1zM509,265h1v1h-1zM504,266h1v1h-1zM516,274h1v1h-1zM512,274h1v1h-1zM503,264h1v1h-1zM503,266h1v1h-1zM520,276h1v1h-1zM502,260h1v1h-1zM513,266h1v1h-1zM521,276h1v1h-1zM503,264h1v1h-1zM514,266h1v1h-1zM507,263h1v1h-1zM508,262h1v1h-1zM512,271h1v1h-1zM509,272h1v1h-1zM519,269h1v1h-1zM510,270h1v1h-1zM515,279h1v1h-1zM506,269h1v1h-1zM510,269h1v1h-1zM520,277h1v1h-1zM508,262h1v1h-1zM498,261h1v1h-1zM507,263h1v1h-1zM516,271h1v1h-1zM518,279h1v1h-1zM517,270h1v1h-1zM500,261h1v1h-1zM504,263h1v1h-1zM502,263h1v1h-1zM515,280h1v1h-1zM498,265h1v1h-1zM506,269h1v1h-1zM519,274h1v1h-1zM503,260h1v1h-1zM512,263h1v1h-1zM498,261h1v1h-1zM515,272h1v1h-1zM506,270h1v1h-1zM508,270h1v1h-1zM513,263h1v1h-1zM509,271h1v1h-1zM499,265h1v1h-1zM547,246h1v1h-1zM557,244h1v1h-1zM552,244h1v1h-1zM550,248h1v1h-1zM556,246h1v1h-1zM559,241h1v1h-1zM559,240h1v1h-1zM550,248h1v1h-1zM554,244h1v1h-1zM560,244h1v1h-1zM550,247h1v1h-1zM554,245h1v1h-1zM554,243h1v1h-1zM546,245h1v1h-1zM552,247h1v1h-1zM555,245h1v1h-1zM552,248h1v1h-1zM547,243h1v1h-1zM557,244h1v1h-1zM511,293h1v1h-1zM505,283h1v1h-1zM506,280h1v1h-1zM510,290h1v1h-1zM508,283h1v1h-1zM507,292h1v1h-1zM510,290h1v1h-1zM508,284h1v1h-1zM507,284h1v1h-1zM512,293h1v1h-1zM510,286h1v1h-1zM513,290h1v1h-1zM508,282h1v1h-1zM508,291h1v1h-1zM509,292h1v1h-1zM507,290h1v1h-1zM543,285h1v1h-1zM541,285h1v1h-1zM538,273h1v1h-1zM541,285h1v1h-1zM538,281h1v1h-1zM541,284h1v1h-1zM542,279h1v1h-1zM540,284h1v1h-1zM538,280h1v1h-1zM541,282h1v1h-1zM539,278h1v1h-1zM539,274h1v1h-1zM540,278h1v1h-1zM540,283h1v1h-1zM539,279h1v1h-1zM538,272h1v1h-1zM541,277h1v1h-1zM537,275h1v1h-1zM539,283h1v1h-1zM531,288h1v1h-1zM532,286h1v1h-1zM533,290h1v1h-1zM532,287h1v1h-1zM528,289h1v1h-1zM528,288h1v1h-1zM531,289h1v1h-1zM381,301h1v1h-1zM384,302h1v1h-1zM392,301h1v1h-1zM395,303h1v1h-1zM399,302h1v1h-1zM407,302h1v1h-1zM411,301h1v1h-1zM415,302h1v1h-1zM420,303h1v1h-1zM383,306h1v1h-1zM400,306h1v1h-1zM402,309h1v1h-1zM405,312h1v1h-1zM405,315h1v1h-1zM412,306h1v1h-1zM415,309h1v1h-1zM413,313h1v1h-1zM414,316h1v1h-1zM417,316h1v1h-1zM420,315h1v1h-1zM422,314h1v1h-1zM422,308h1v1h-1zM427,311h1v1h-1zM430,312h1v1h-1zM430,316h1v1h-1zM432,321h1v1h-1zM435,319h1v1h-1zM432,322h1v1h-1zM432,324h1v1h-1zM443,324h1v1h-1zM447,322h1v1h-1zM384,311h1v1h-1zM387,312h1v1h-1zM401,319h1v1h-1zM405,322h1v1h-1zM407,321h1v1h-1zM410,319h1v1h-1zM412,321h1v1h-1zM415,322h1v1h-1zM404,324h1v1h-1zM417,319h1v1h-1zM389,326h1v1h-1zM401,329h1v1h-1zM406,330h1v1h-1zM410,330h1v1h-1zM412,329h1v1h-1zM400,334h1v1h-1zM403,335h1v1h-1zM404,333h1v1h-1zM407,334h1v1h-1zM409,336h1v1h-1zM404,340h1v1h-1zM401,342h1v1h-1zM396,342h1v1h-1zM391,342h1v1h-1zM556,283h1v1h-1zM608,283h1v1h-1zM602,295h1v1h-1zM601,325h1v1h-1zM618,320h1v1h-1zM542,291h1v1h-1zM547,299h1v1h-1zM535,301h1v1h-1zM536,296h1v1h-1zM531,295h1v1h-1zM528,298h1v1h-1zM521,294h1v1h-1zM523,291h1v1h-1zM525,290h1v1h-1zM528,287h1v1h-1zM532,286h1v1h-1zM533,288h1v1h-1zM537,285h1v1h-1zM540,282h1v1h-1zM543,285h1v1h-1zM544,281h1v1h-1zM507,296h1v1h-1zM510,299h1v1h-1zM512,296h1v1h-1zM515,302h1v1h-1zM519,304h1v1h-1zM522,304h1v1h-1zM526,305h1v1h-1zM516,308h1v1h-1zM540,308h1v1h-1zM574,307h1v1h-1zM583,334h1v1h-1zM581,340h1v1h-1zM579,342h1v1h-1zM577,344h1v1h-1zM571,348h1v1h-1zM562,343h1v1h-1zM530,340h1v1h-1zM574,355h1v1h-1zM613,347h1v1h-1zM614,352h1v1h-1zM610,355h1v1h-1zM607,359h1v1h-1zM500,286h1v1h-1zM504,286h1v1h-1zM507,282h1v1h-1zM507,289h1v1h-1zM511,287h1v1h-1zM512,292h1v1h-1zM509,289h1v1h-1zM510,290h1v1h-1zM510,288h1v1h-1zM509,287h1v1h-1zM510,291h1v1h-1zM505,282h1v1h-1zM508,285h1v1h-1zM508,288h1v1h-1zM141,263h1v1h-1zM121,314h1v1h-1zM116,324h1v1h-1zM138,324h1v1h-1zM152,318h1v1h-1zM291,202h1v1h-1zM290,226h1v1h-1zM365,224h1v1h-1zM364,224h1v1h-1zM361,219h1v1h-1zM358,219h1v1h-1zM361,223h1v1h-1zM363,224h1v1h-1zM357,219h1v1h-1zM356,214h1v1h-1zM367,225h1v1h-1zM362,211h1v1h-1zM368,220h1v1h-1zM363,222h1v1h-1zM365,217h1v1h-1zM359,224h1v1h-1zM361,225h1v1h-1zM360,223h1v1h-1zM365,219h1v1h-1zM361,224h1v1h-1zM360,223h1v1h-1zM362,216h1v1h-1zM365,221h1v1h-1zM366,222h1v1h-1zM365,221h1v1h-1zM366,216h1v1h-1zM360,216h1v1h-1zM359,213h1v1h-1zM358,218h1v1h-1zM363,217h1v1h-1zM357,220h1v1h-1zM360,217h1v1h-1zM359,217h1v1h-1zM363,213h1v1h-1zM361,213h1v1h-1zM360,218h1v1h-1zM356,218h1v1h-1zM396,222h1v1h-1zM383,227h1v1h-1zM409,213h1v1h-1zM372,216h1v1h-1zM436,217h1v1h-1zM389,217h1v1h-1zM379,217h1v1h-1zM386,229h1v1h-1zM401,225h1v1h-1zM382,219h1v1h-1zM426,219h1v1h-1zM373,225h1v1h-1zM409,224h1v1h-1zM416,224h1v1h-1zM436,221h1v1h-1zM418,221h1v1h-1zM386,229h1v1h-1zM395,223h1v1h-1zM412,214h1v1h-1zM414,230h1v1h-1zM439,222h1v1h-1zM394,223h1v1h-1zM405,232h1v1h-1zM391,235h1v1h-1zM405,227h1v1h-1zM370,231h1v1h-1zM414,218h1v1h-1zM394,231h1v1h-1zM437,220h1v1h-1zM403,223h1v1h-1zM408,225h1v1h-1zM398,219h1v1h-1zM423,226h1v1h-1zM402,218h1v1h-1zM375,217h1v1h-1zM399,213h1v1h-1zM401,222h1v1h-1zM397,229h1v1h-1zM388,216h1v1h-1zM429,227h1v1h-1zM415,212h1v1h-1zM439,214h1v1h-1zM382,220h1v1h-1zM378,227h1v1h-1zM397,208h1v1h-1zM411,213h1v1h-1zM409,219h1v1h-1zM418,213h1v1h-1zM389,221h1v1h-1zM404,227h1v1h-1zM409,226h1v1h-1zM409,218h1v1h-1zM428,226h1v1h-1zM426,229h1v1h-1zM387,226h1v1h-1zM373,216h1v1h-1zM378,229h1v1h-1zM403,220h1v1h-1zM374,219h1v1h-1zM378,227h1v1h-1zM417,227h1v1h-1zM401,211h1v1h-1zM388,221h1v1h-1zM402,223h1v1h-1zM416,220h1v1h-1zM428,222h1v1h-1zM422,216h1v1h-1zM385,224h1v1h-1zM377,221h1v1h-1zM373,232h1v1h-1zM427,218h1v1h-1zM419,224h1v1h-1zM427,231h1v1h-1zM398,218h1v1h-1zM426,221h1v1h-1zM382,233h1v1h-1zM409,218h1v1h-1zM418,227h1v1h-1zM380,213h1v1h-1zM385,224h1v1h-1zM389,229h1v1h-1zM386,215h1v1h-1zM430,215h1v1h-1zM422,228h1v1h-1zM401,225h1v1h-1zM384,220h1v1h-1zM398,227h1v1h-1zM403,216h1v1h-1zM435,218h1v1h-1zM436,217h1v1h-1zM420,230h1v1h-1zM399,228h1v1h-1zM391,209h1v1h-1zM405,214h1v1h-1zM397,213h1v1h-1zM384,233h1v1h-1zM390,225h1v1h-1zM407,222h1v1h-1zM390,229h1v1h-1zM424,221h1v1h-1zM373,234h1v1h-1zM437,213h1v1h-1zM416,211h1v1h-1zM435,215h1v1h-1zM414,215h1v1h-1zM392,236h1v1h-1zM376,219h1v1h-1zM387,229h1v1h-1zM382,228h1v1h-1zM400,211h1v1h-1zM381,228h1v1h-1zM396,211h1v1h-1zM369,219h1v1h-1zM420,210h1v1h-1zM374,231h1v1h-1zM421,211h1v1h-1zM439,211h1v1h-1zM413,221h1v1h-1zM419,227h1v1h-1zM375,220h1v1h-1zM421,226h1v1h-1zM388,211h1v1h-1zM406,226h1v1h-1zM414,216h1v1h-1zM403,223h1v1h-1zM421,216h1v1h-1zM368,235h1v1h-1zM437,223h1v1h-1zM372,223h1v1h-1zM409,224h1v1h-1zM429,225h1v1h-1zM392,229h1v1h-1zM424,223h1v1h-1zM412,223h1v1h-1zM395,229h1v1h-1zM370,224h1v1h-1zM411,216h1v1h-1zM387,223h1v1h-1zM379,233h1v1h-1zM405,219h1v1h-1zM417,230h1v1h-1zM370,221h1v1h-1zM398,226h1v1h-1zM387,230h1v1h-1zM420,210h1v1h-1zM418,229h1v1h-1zM404,232h1v1h-1zM419,212h1v1h-1zM374,232h1v1h-1zM425,215h1v1h-1zM369,230h1v1h-1zM399,218h1v1h-1zM402,225h1v1h-1zM392,215h1v1h-1zM372,225h1v1h-1zM419,214h1v1h-1zM430,214h1v1h-1zM400,219h1v1h-1zM429,224h1v1h-1zM396,217h1v1h-1zM396,230h1v1h-1zM392,223h1v1h-1zM399,216h1v1h-1zM428,217h1v1h-1zM379,225h1v1h-1zM387,227h1v1h-1zM399,226h1v1h-1zM401,231h1v1h-1zM422,214h1v1h-1zM382,218h1v1h-1zM419,210h1v1h-1zM404,214h1v1h-1zM401,209h1v1h-1zM432,223h1v1h-1zM417,219h1v1h-1zM407,221h1v1h-1zM437,214h1v1h-1zM384,217h1v1h-1zM425,229h1v1h-1zM420,217h1v1h-1zM379,232h1v1h-1zM376,222h1v1h-1zM395,224h1v1h-1zM437,213h1v1h-1zM387,215h1v1h-1zM428,217h1v1h-1zM391,223h1v1h-1zM415,215h1v1h-1zM395,221h1v1h-1zM421,215h1v1h-1zM399,232h1v1h-1zM374,233h1v1h-1zM392,227h1v1h-1zM413,225h1v1h-1zM384,233h1v1h-1zM433,221h1v1h-1zM427,217h1v1h-1zM377,225h1v1h-1zM426,219h1v1h-1zM377,214h1v1h-1zM378,216h1v1h-1zM411,215h1v1h-1zM386,220h1v1h-1zM385,211h1v1h-1zM404,227h1v1h-1zM391,224h1v1h-1zM401,236h1v1h-1zM402,219h1v1h-1zM378,217h1v1h-1zM439,224h1v1h-1zM414,215h1v1h-1zM425,218h1v1h-1zM377,226h1v1h-1zM425,229h1v1h-1zM407,225h1v1h-1zM431,222h1v1h-1zM387,222h1v1h-1zM381,224h1v1h-1zM428,217h1v1h-1zM437,219h1v1h-1zM436,219h1v1h-1zM424,214h1v1h-1zM409,212h1v1h-1zM387,229h1v1h-1zM374,230h1v1h-1zM438,214h1v1h-1zM375,231h1v1h-1zM371,229h1v1h-1zM398,215h1v1h-1zM431,222h1v1h-1zM393,224h1v1h-1zM372,222h1v1h-1zM430,228h1v1h-1zM416,212h1v1h-1zM369,234h1v1h-1zM386,217h1v1h-1zM377,219h1v1h-1zM420,224h1v1h-1zM409,226h1v1h-1zM378,229h1v1h-1zM419,230h1v1h-1zM384,216h1v1h-1zM376,218h1v1h-1zM396,216h1v1h-1zM414,226h1v1h-1zM377,216h1v1h-1zM370,234h1v1h-1zM387,219h1v1h-1zM401,228h1v1h-1zM371,224h1v1h-1zM392,221h1v1h-1zM384,222h1v1h-1zM381,215h1v1h-1zM369,231h1v1h-1zM390,224h1v1h-1zM426,220h1v1h-1zM400,235h1v1h-1zM400,209h1v1h-1zM402,236h1v1h-1zM425,228h1v1h-1zM422,212h1v1h-1zM425,211h1v1h-1zM393,219h1v1h-1zM389,215h1v1h-1zM399,235h1v1h-1zM424,227h1v1h-1zM404,220h1v1h-1zM395,211h1v1h-1zM386,224h1v1h-1zM390,220h1v1h-1zM393,222h1v1h-1zM385,211h1v1h-1zM410,229h1v1h-1zM367,235h1v1h-1zM389,214h1v1h-1zM426,216h1v1h-1zM385,222h1v1h-1zM438,221h1v1h-1zM427,215h1v1h-1zM396,227h1v1h-1zM378,213h1v1h-1zM427,230h1v1h-1zM426,223h1v1h-1zM376,217h1v1h-1zM402,211h1v1h-1zM383,221h1v1h-1zM385,233h1v1h-1zM402,227h1v1h-1zM392,226h1v1h-1zM409,218h1v1h-1zM421,229h1v1h-1zM386,219h1v1h-1zM376,225h1v1h-1zM413,228h1v1h-1zM384,220h1v1h-1zM365,232h1v1h-1zM433,227h1v1h-1zM383,232h1v1h-1zM413,220h1v1h-1zM393,218h1v1h-1zM383,222h1v1h-1zM394,210h1v1h-1zM403,228h1v1h-1zM428,219h1v1h-1zM413,226h1v1h-1zM387,210h1v1h-1zM384,229h1v1h-1zM432,216h1v1h-1zM375,231h1v1h-1zM425,226h1v1h-1zM414,228h1v1h-1zM419,228h1v1h-1zM440,215h1v1h-1zM396,219h1v1h-1zM407,213h1v1h-1zM419,214h1v1h-1zM405,232h1v1h-1zM402,234h1v1h-1zM378,228h1v1h-1zM389,209h1v1h-1zM391,231h1v1h-1zM387,232h1v1h-1zM389,215h1v1h-1zM386,234h1v1h-1zM400,234h1v1h-1zM369,235h1v1h-1zM402,234h1v1h-1zM393,216h1v1h-1zM368,234h1v1h-1zM395,225h1v1h-1zM433,221h1v1h-1zM388,230h1v1h-1zM423,222h1v1h-1zM385,231h1v1h-1zM377,231h1v1h-1zM401,231h1v1h-1zM371,226h1v1h-1zM412,220h1v1h-1zM437,219h1v1h-1zM388,233h1v1h-1zM378,228h1v1h-1zM412,215h1v1h-1zM417,218h1v1h-1zM374,219h1v1h-1zM409,212h1v1h-1zM427,216h1v1h-1zM386,230h1v1h-1zM409,217h1v1h-1zM391,213h1v1h-1zM395,214h1v1h-1zM419,211h1v1h-1zM420,226h1v1h-1zM377,218h1v1h-1zM431,215h1v1h-1zM416,220h1v1h-1zM393,224h1v1h-1zM400,212h1v1h-1zM417,227h1v1h-1zM387,228h1v1h-1zM414,215h1v1h-1zM419,210h1v1h-1zM379,213h1v1h-1zM384,223h1v1h-1zM379,229h1v1h-1zM402,213h1v1h-1zM435,217h1v1h-1zM371,223h1v1h-1zM419,210h1v1h-1zM383,214h1v1h-1zM439,216h1v1h-1zM399,210h1v1h-1zM386,232h1v1h-1zM388,230h1v1h-1zM371,231h1v1h-1zM367,234h1v1h-1zM391,221h1v1h-1zM371,233h1v1h-1zM378,219h1v1h-1zM437,215h1v1h-1zM393,234h1v1h-1zM425,227h1v1h-1zM425,210h1v1h-1zM396,226h1v1h-1zM425,228h1v1h-1zM378,219h1v1h-1zM395,208h1v1h-1zM384,217h1v1h-1zM418,228h1v1h-1zM422,225h1v1h-1zM415,217h1v1h-1zM404,229h1v1h-1zM371,228h1v1h-1zM383,218h1v1h-1zM415,219h1v1h-1zM428,225h1v1h-1zM401,214h1v1h-1zM381,227h1v1h-1zM395,214h1v1h-1zM359,246h1v1h-1zM359,247h1v1h-1zM359,233h1v1h-1zM360,243h1v1h-1zM352,238h1v1h-1zM352,242h1v1h-1zM363,236h1v1h-1zM360,234h1v1h-1zM358,232h1v1h-1zM355,239h1v1h-1zM361,243h1v1h-1zM360,243h1v1h-1zM364,233h1v1h-1zM365,235h1v1h-1zM357,247h1v1h-1zM369,236h1v1h-1zM361,244h1v1h-1zM351,234h1v1h-1zM353,244h1v1h-1zM365,233h1v1h-1zM362,234h1v1h-1zM359,246h1v1h-1zM365,233h1v1h-1zM366,239h1v1h-1zM353,240h1v1h-1zM361,231h1v1h-1zM360,240h1v1h-1zM369,234h1v1h-1zM362,245h1v1h-1zM353,238h1v1h-1zM360,238h1v1h-1zM365,236h1v1h-1zM359,233h1v1h-1zM359,244h1v1h-1zM365,236h1v1h-1zM363,234h1v1h-1zM363,236h1v1h-1zM357,244h1v1h-1zM364,237h1v1h-1zM353,237h1v1h-1zM360,242h1v1h-1zM364,239h1v1h-1zM356,247h1v1h-1zM366,241h1v1h-1zM364,234h1v1h-1zM365,234h1v1h-1zM356,235h1v1h-1zM356,245h1v1h-1zM351,246h1v1h-1zM352,247h1v1h-1zM365,241h1v1h-1zM355,246h1v1h-1zM366,236h1v1h-1zM355,243h1v1h-1zM364,243h1v1h-1zM365,241h1v1h-1zM369,236h1v1h-1zM354,244h1v1h-1zM354,234h1v1h-1zM361,238h1v1h-1zM359,241h1v1h-1zM353,242h1v1h-1zM355,237h1v1h-1zM364,233h1v1h-1zM353,237h1v1h-1zM363,243h1v1h-1zM360,242h1v1h-1zM357,246h1v1h-1zM357,235h1v1h-1zM354,232h1v1h-1zM380,239h1v1h-1zM381,236h1v1h-1zM378,237h1v1h-1zM379,239h1v1h-1zM380,245h1v1h-1zM381,242h1v1h-1zM381,238h1v1h-1zM379,244h1v1h-1zM380,236h1v1h-1zM381,243h1v1h-1zM380,238h1v1h-1zM377,235h1v1h-1zM383,241h1v1h-1zM411,236h1v1h-1zM400,239h1v1h-1zM413,240h1v1h-1zM410,244h1v1h-1zM412,246h1v1h-1zM411,245h1v1h-1zM402,234h1v1h-1zM417,240h1v1h-1zM408,242h1v1h-1zM418,242h1v1h-1zM424,235h1v1h-1zM414,248h1v1h-1zM418,245h1v1h-1zM410,242h1v1h-1zM412,242h1v1h-1zM423,238h1v1h-1zM417,248h1v1h-1zM403,240h1v1h-1zM413,241h1v1h-1zM397,236h1v1h-1zM420,236h1v1h-1zM420,247h1v1h-1zM423,250h1v1h-1zM407,242h1v1h-1zM408,238h1v1h-1zM422,238h1v1h-1zM407,243h1v1h-1zM411,239h1v1h-1zM402,240h1v1h-1zM421,241h1v1h-1zM404,238h1v1h-1zM410,236h1v1h-1zM412,247h1v1h-1zM420,235h1v1h-1zM410,237h1v1h-1zM421,234h1v1h-1zM411,240h1v1h-1zM411,248h1v1h-1zM410,242h1v1h-1zM425,241h1v1h-1zM418,239h1v1h-1zM416,238h1v1h-1zM407,241h1v1h-1zM405,241h1v1h-1zM414,247h1v1h-1zM419,243h1v1h-1zM407,236h1v1h-1zM423,244h1v1h-1zM424,245h1v1h-1zM408,239h1v1h-1zM393,236h1v1h-1zM422,239h1v1h-1zM407,240h1v1h-1zM420,237h1v1h-1zM410,236h1v1h-1zM414,239h1v1h-1zM414,247h1v1h-1zM409,239h1v1h-1zM422,242h1v1h-1zM408,241h1v1h-1zM412,241h1v1h-1zM396,235h1v1h-1zM399,236h1v1h-1zM396,237h1v1h-1zM419,245h1v1h-1zM408,241h1v1h-1zM399,235h1v1h-1zM412,242h1v1h-1zM414,237h1v1h-1zM425,248h1v1h-1zM412,246h1v1h-1zM419,236h1v1h-1zM414,237h1v1h-1zM416,239h1v1h-1zM407,243h1v1h-1zM395,236h1v1h-1zM420,241h1v1h-1zM406,235h1v1h-1zM418,241h1v1h-1zM419,248h1v1h-1zM418,244h1v1h-1zM409,239h1v1h-1zM418,239h1v1h-1zM411,245h1v1h-1zM417,245h1v1h-1zM408,237h1v1h-1zM420,237h1v1h-1zM421,240h1v1h-1zM418,243h1v1h-1zM414,245h1v1h-1zM402,239h1v1h-1zM406,239h1v1h-1zM417,240h1v1h-1zM457,217h1v1h-1zM448,218h1v1h-1zM445,213h1v1h-1zM447,221h1v1h-1zM456,224h1v1h-1zM454,222h1v1h-1zM450,221h1v1h-1zM443,211h1v1h-1zM449,214h1v1h-1zM452,221h1v1h-1zM455,210h1v1h-1zM442,210h1v1h-1zM460,216h1v1h-1zM441,212h1v1h-1zM442,208h1v1h-1zM453,217h1v1h-1zM455,219h1v1h-1zM459,244h1v1h-1zM446,251h1v1h-1zM464,240h1v1h-1zM441,249h1v1h-1zM455,238h1v1h-1zM463,242h1v1h-1zM452,249h1v1h-1zM455,253h1v1h-1zM448,256h1v1h-1zM458,237h1v1h-1zM448,243h1v1h-1zM457,252h1v1h-1zM454,249h1v1h-1zM442,250h1v1h-1zM447,241h1v1h-1zM440,256h1v1h-1zM460,256h1v1h-1zM442,259h1v1h-1zM454,242h1v1h-1zM467,239h1v1h-1zM446,253h1v1h-1zM466,237h1v1h-1zM446,239h1v1h-1zM458,236h1v1h-1zM443,259h1v1h-1zM460,251h1v1h-1zM458,254h1v1h-1zM454,250h1v1h-1zM467,240h1v1h-1zM447,248h1v1h-1zM442,255h1v1h-1zM454,247h1v1h-1zM455,243h1v1h-1zM461,236h1v1h-1zM454,252h1v1h-1zM440,237h1v1h-1zM457,241h1v1h-1zM458,239h1v1h-1zM456,238h1v1h-1zM531,251h1v1h-1zM526,246h1v1h-1zM519,254h1v1h-1zM526,260h1v1h-1zM516,249h1v1h-1zM522,236h1v1h-1zM529,241h1v1h-1zM516,258h1v1h-1zM518,246h1v1h-1zM533,255h1v1h-1zM535,249h1v1h-1zM528,254h1v1h-1zM531,251h1v1h-1zM530,240h1v1h-1zM526,249h1v1h-1zM519,249h1v1h-1zM539,233h1v1h-1zM527,238h1v1h-1zM538,232h1v1h-1zM517,258h1v1h-1zM525,251h1v1h-1zM520,239h1v1h-1zM523,237h1v1h-1zM539,237h1v1h-1zM530,261h1v1h-1zM526,250h1v1h-1zM511,242h1v1h-1zM544,230h1v1h-1zM524,236h1v1h-1zM522,251h1v1h-1zM516,260h1v1h-1zM511,253h1v1h-1zM534,237h1v1h-1zM541,233h1v1h-1zM536,251h1v1h-1zM538,249h1v1h-1zM533,252h1v1h-1zM524,240h1v1h-1zM534,258h1v1h-1zM530,241h1v1h-1zM521,238h1v1h-1zM529,238h1v1h-1zM526,243h1v1h-1zM535,242h1v1h-1zM517,256h1v1h-1zM527,241h1v1h-1zM521,243h1v1h-1zM520,257h1v1h-1zM540,238h1v1h-1zM528,260h1v1h-1zM518,238h1v1h-1zM538,251h1v1h-1zM522,251h1v1h-1zM522,255h1v1h-1zM542,235h1v1h-1zM516,246h1v1h-1zM525,239h1v1h-1zM530,258h1v1h-1zM525,260h1v1h-1zM552,228h1v1h-1zM544,229h1v1h-1zM531,234h1v1h-1zM547,231h1v1h-1zM544,236h1v1h-1zM530,257h1v1h-1zM531,253h1v1h-1zM524,239h1v1h-1zM521,252h1v1h-1zM519,262h1v1h-1zM548,235h1v1h-1zM515,251h1v1h-1zM531,250h1v1h-1zM512,252h1v1h-1zM529,234h1v1h-1zM516,262h1v1h-1zM531,244h1v1h-1zM523,254h1v1h-1zM525,255h1v1h-1zM522,259h1v1h-1zM523,237h1v1h-1zM538,241h1v1h-1zM520,255h1v1h-1zM527,247h1v1h-1zM532,248h1v1h-1zM537,239h1v1h-1zM538,231h1v1h-1zM547,231h1v1h-1zM549,234h1v1h-1zM541,236h1v1h-1zM526,250h1v1h-1zM519,246h1v1h-1zM550,229h1v1h-1zM546,229h1v1h-1zM528,241h1v1h-1zM514,255h1v1h-1zM534,234h1v1h-1zM533,236h1v1h-1zM538,233h1v1h-1zM514,252h1v1h-1zM526,244h1v1h-1zM528,240h1v1h-1zM530,240h1v1h-1zM524,241h1v1h-1zM535,235h1v1h-1zM521,265h1v1h-1zM530,242h1v1h-1zM536,247h1v1h-1zM523,235h1v1h-1zM548,227h1v1h-1zM522,248h1v1h-1zM526,249h1v1h-1zM520,259h1v1h-1zM514,242h1v1h-1zM517,259h1v1h-1zM523,255h1v1h-1zM512,257h1v1h-1zM525,259h1v1h-1zM528,261h1v1h-1zM549,235h1v1h-1zM527,238h1v1h-1zM516,246h1v1h-1zM530,250h1v1h-1zM532,235h1v1h-1zM523,242h1v1h-1zM532,257h1v1h-1zM535,246h1v1h-1zM539,234h1v1h-1zM537,256h1v1h-1zM551,230h1v1h-1zM525,239h1v1h-1zM519,241h1v1h-1zM510,254h1v1h-1zM515,244h1v1h-1zM534,234h1v1h-1zM533,237h1v1h-1zM531,255h1v1h-1zM516,254h1v1h-1zM517,238h1v1h-1zM512,252h1v1h-1zM510,242h1v1h-1zM522,260h1v1h-1zM539,235h1v1h-1zM514,239h1v1h-1zM518,246h1v1h-1zM533,240h1v1h-1zM525,240h1v1h-1zM538,236h1v1h-1zM546,227h1v1h-1zM535,237h1v1h-1zM517,262h1v1h-1zM439,241h1v1h-1zM436,251h1v1h-1zM417,244h1v1h-1zM451,246h1v1h-1zM433,244h1v1h-1zM412,249h1v1h-1zM446,255h1v1h-1zM432,242h1v1h-1zM452,245h1v1h-1zM411,245h1v1h-1zM450,252h1v1h-1zM444,255h1v1h-1zM426,247h1v1h-1zM451,256h1v1h-1zM410,243h1v1h-1zM444,250h1v1h-1zM419,250h1v1h-1zM417,244h1v1h-1zM440,246h1v1h-1zM440,248h1v1h-1zM431,250h1v1h-1zM441,246h1v1h-1zM448,248h1v1h-1zM412,243h1v1h-1zM430,246h1v1h-1zM428,244h1v1h-1zM443,246h1v1h-1zM443,250h1v1h-1zM445,249h1v1h-1zM431,247h1v1h-1zM442,249h1v1h-1zM431,251h1v1h-1zM408,245h1v1h-1zM425,245h1v1h-1zM447,248h1v1h-1zM427,250h1v1h-1zM453,252h1v1h-1zM412,247h1v1h-1zM428,243h1v1h-1zM435,252h1v1h-1zM415,248h1v1h-1zM451,254h1v1h-1zM442,242h1v1h-1zM411,248h1v1h-1zM272,249h1v1h-1zM255,259h1v1h-1zM245,279h1v1h-1zM251,281h1v1h-1zM282,284h1v1h-1zM286,285h1v1h-1zM290,287h1v1h-1zM293,295h1v1h-1zM297,295h1v1h-1zM278,298h1v1h-1zM287,298h1v1h-1zM273,306h1v1h-1zM268,308h1v1h-1zM260,300h1v1h-1zM209,261h1v1h-1zM206,236h1v1h-1zM215,236h1v1h-1zM215,239h1v1h-1zM202,242h1v1h-1zM214,244h1v1h-1zM220,242h1v1h-1zM220,247h1v1h-1zM214,249h1v1h-1zM240,241h1v1h-1zM241,247h1v1h-1zM246,251h1v1h-1zM240,238h1v1h-1zM248,244h1v1h-1zM231,249h1v1h-1zM232,246h1v1h-1zM242,237h1v1h-1zM256,240h1v1h-1zM251,233h1v1h-1zM230,234h1v1h-1zM250,236h1v1h-1zM244,249h1v1h-1zM247,230h1v1h-1zM261,235h1v1h-1zM249,240h1v1h-1zM242,232h1v1h-1zM249,235h1v1h-1zM247,244h1v1h-1zM248,248h1v1h-1zM252,231h1v1h-1zM259,237h1v1h-1zM263,231h1v1h-1zM242,234h1v1h-1zM252,243h1v1h-1zM253,243h1v1h-1zM257,234h1v1h-1zM244,243h1v1h-1zM263,232h1v1h-1zM237,238h1v1h-1zM240,231h1v1h-1zM242,242h1v1h-1zM237,233h1v1h-1zM253,236h1v1h-1zM246,241h1v1h-1zM253,243h1v1h-1zM229,246h1v1h-1zM245,245h1v1h-1zM237,243h1v1h-1zM238,241h1v1h-1zM230,242h1v1h-1zM246,244h1v1h-1zM245,234h1v1h-1zM250,245h1v1h-1zM265,230h1v1h-1zM226,244h1v1h-1zM230,248h1v1h-1zM242,237h1v1h-1zM248,244h1v1h-1zM236,247h1v1h-1zM237,241h1v1h-1zM238,230h1v1h-1zM253,237h1v1h-1zM255,243h1v1h-1zM238,237h1v1h-1zM258,244h1v1h-1zM245,244h1v1h-1zM239,247h1v1h-1zM242,246h1v1h-1zM259,237h1v1h-1zM255,237h1v1h-1zM247,235h1v1h-1zM253,247h1v1h-1zM261,238h1v1h-1zM265,236h1v1h-1zM251,248h1v1h-1zM248,238h1v1h-1zM249,249h1v1h-1zM256,245h1v1h-1zM238,231h1v1h-1zM242,241h1v1h-1zM235,240h1v1h-1zM264,235h1v1h-1zM237,232h1v1h-1zM226,241h1v1h-1zM245,234h1v1h-1zM246,247h1v1h-1zM231,249h1v1h-1zM253,233h1v1h-1zM255,240h1v1h-1zM254,241h1v1h-1zM253,243h1v1h-1zM228,240h1v1h-1zM227,241h1v1h-1zM252,237h1v1h-1zM249,237h1v1h-1zM261,237h1v1h-1zM233,236h1v1h-1zM238,240h1v1h-1zM230,233h1v1h-1zM236,230h1v1h-1zM250,241h1v1h-1zM233,238h1v1h-1zM238,233h1v1h-1zM254,236h1v1h-1zM235,232h1v1h-1zM250,237h1v1h-1zM243,233h1v1h-1zM244,245h1v1h-1zM242,234h1v1h-1zM249,243h1v1h-1zM250,237h1v1h-1zM252,242h1v1h-1zM244,233h1v1h-1zM244,240h1v1h-1zM253,245h1v1h-1zM244,235h1v1h-1zM234,249h1v1h-1zM241,245h1v1h-1zM252,247h1v1h-1zM261,240h1v1h-1zM226,240h1v1h-1zM239,240h1v1h-1zM232,247h1v1h-1zM250,233h1v1h-1zM229,248h1v1h-1zM258,237h1v1h-1zM251,247h1v1h-1zM247,239h1v1h-1zM242,244h1v1h-1zM241,237h1v1h-1zM258,243h1v1h-1zM257,239h1v1h-1zM257,242h1v1h-1zM235,244h1v1h-1zM248,241h1v1h-1zM249,240h1v1h-1zM248,248h1v1h-1zM232,251h1v1h-1zM240,241h1v1h-1zM252,232h1v1h-1zM231,242h1v1h-1zM241,243h1v1h-1zM191,242h1v1h-1zM206,254h1v1h-1zM197,242h1v1h-1zM196,244h1v1h-1zM200,250h1v1h-1zM191,237h1v1h-1zM196,239h1v1h-1zM201,248h1v1h-1zM192,236h1v1h-1zM191,241h1v1h-1zM191,239h1v1h-1zM190,238h1v1h-1zM192,244h1v1h-1zM207,254h1v1h-1zM195,241h1v1h-1zM204,251h1v1h-1zM193,241h1v1h-1zM241,278h1v1h-1zM236,274h1v1h-1zM235,271h1v1h-1zM238,275h1v1h-1zM235,271h1v1h-1zM240,272h1v1h-1zM259,266h1v1h-1zM258,265h1v1h-1zM251,264h1v1h-1zM257,267h1v1h-1zM256,265h1v1h-1zM257,264h1v1h-1zM256,266h1v1h-1zM250,262h1v1h-1zM268,269h1v1h-1zM267,267h1v1h-1zM262,268h1v1h-1zM278,272h1v1h-1zM277,273h1v1h-1zM280,274h1v1h-1zM277,274h1v1h-1zM227,272h1v1h-1zM207,252h1v1h-1zM217,268h1v1h-1zM223,253h1v1h-1zM227,269h1v1h-1zM210,261h1v1h-1zM235,268h1v1h-1zM228,257h1v1h-1zM221,266h1v1h-1zM226,260h1v1h-1zM228,268h1v1h-1zM206,253h1v1h-1zM235,268h1v1h-1zM213,261h1v1h-1zM206,255h1v1h-1zM210,258h1v1h-1zM231,273h1v1h-1zM222,257h1v1h-1zM235,268h1v1h-1zM218,254h1v1h-1zM214,260h1v1h-1zM224,271h1v1h-1zM223,258h1v1h-1zM228,268h1v1h-1zM229,264h1v1h-1zM232,267h1v1h-1zM215,257h1v1h-1zM227,271h1v1h-1zM223,268h1v1h-1zM223,269h1v1h-1zM215,263h1v1h-1zM217,265h1v1h-1zM209,261h1v1h-1zM217,266h1v1h-1zM234,270h1v1h-1zM221,268h1v1h-1zM220,260h1v1h-1zM229,270h1v1h-1zM222,255h1v1h-1zM235,268h1v1h-1zM219,264h1v1h-1zM219,253h1v1h-1zM210,261h1v1h-1zM219,255h1v1h-1zM208,257h1v1h-1zM224,262h1v1h-1zM217,264h1v1h-1zM235,272h1v1h-1zM235,272h1v1h-1zM216,266h1v1h-1zM224,270h1v1h-1zM225,264h1v1h-1zM219,260h1v1h-1zM219,265h1v1h-1zM218,263h1v1h-1zM231,270h1v1h-1zM222,256h1v1h-1zM212,255h1v1h-1zM219,260h1v1h-1zM241,270h1v1h-1zM231,265h1v1h-1zM212,255h1v1h-1zM208,257h1v1h-1zM211,255h1v1h-1zM213,263h1v1h-1zM207,257h1v1h-1zM219,258h1v1h-1zM221,261h1v1h-1zM211,260h1v1h-1zM233,273h1v1h-1zM218,266h1v1h-1zM223,256h1v1h-1zM227,271h1v1h-1zM222,266h1v1h-1zM233,271h1v1h-1zM211,262h1v1h-1zM217,259h1v1h-1zM226,260h1v1h-1zM218,264h1v1h-1zM240,271h1v1h-1zM248,251h1v1h-1zM248,252h1v1h-1zM251,254h1v1h-1zM247,254h1v1h-1zM249,255h1v1h-1zM257,279h1v1h-1zM262,284h1v1h-1zM254,287h1v1h-1zM273,280h1v1h-1zM267,282h1v1h-1zM263,283h1v1h-1zM270,279h1v1h-1zM256,280h1v1h-1zM270,278h1v1h-1zM273,278h1v1h-1zM255,280h1v1h-1zM257,280h1v1h-1zM262,280h1v1h-1zM258,277h1v1h-1zM270,280h1v1h-1zM256,284h1v1h-1zM266,281h1v1h-1zM265,281h1v1h-1zM257,279h1v1h-1zM258,288h1v1h-1zM256,282h1v1h-1zM255,287h1v1h-1zM261,281h1v1h-1zM254,287h1v1h-1zM257,279h1v1h-1zM256,278h1v1h-1zM255,286h1v1h-1zM255,278h1v1h-1zM259,277h1v1h-1zM258,281h1v1h-1zM256,288h1v1h-1zM262,278h1v1h-1zM259,284h1v1h-1zM251,301h1v1h-1zM250,294h1v1h-1zM252,295h1v1h-1zM252,300h1v1h-1zM256,299h1v1h-1zM253,297h1v1h-1zM252,294h1v1h-1zM251,292h1v1h-1zM250,296h1v1h-1zM251,296h1v1h-1zM255,296h1v1h-1zM254,304h1v1h-1zM255,292h1v1h-1zM254,303h1v1h-1zM251,293h1v1h-1zM254,302h1v1h-1zM256,310h1v1h-1zM254,302h1v1h-1zM254,300h1v1h-1zM252,305h1v1h-1zM251,295h1v1h-1zM255,303h1v1h-1zM222,249h1v1h-1zM215,244h1v1h-1zM210,243h1v1h-1zM224,245h1v1h-1zM225,235h1v1h-1zM222,240h1v1h-1zM212,238h1v1h-1zM226,241h1v1h-1zM216,248h1v1h-1zM215,237h1v1h-1zM215,240h1v1h-1zM207,242h1v1h-1zM226,237h1v1h-1zM223,240h1v1h-1zM209,244h1v1h-1zM218,233h1v1h-1zM222,243h1v1h-1zM222,242h1v1h-1zM217,247h1v1h-1zM218,238h1v1h-1zM218,249h1v1h-1zM221,238h1v1h-1zM226,238h1v1h-1zM224,232h1v1h-1zM227,237h1v1h-1z" fill="#e61a1a"/><g font-family="Liberation Sans" font-size="6" letter-spacing="0.55" fill="#5ab4e6" stroke="#fff" stroke-width="2.2" paint-order="stroke" stroke-opacity="0.75" shape-rendering="auto"><text x="377" y="174.5" text-anchor="middle">Arctic ocean</text><text x="304.5" y="252.7" text-anchor="middle">Atlantic ocean</text><text x="194" y="289.0" text-anchor="middle">Pacific ocean</text><text x="479.5" y="307.9" text-anchor="middle">Indian ocean</text><text x="596.5" y="261.1" text-anchor="middle">Pacific ocean</text><text x="378" y="390.0" text-anchor="middle">Antarctic ocean</text></g><rect x="108.2" y="165.2" width="511.1" height="254.8" fill="none" stroke="#000" stroke-width="2"/><rect x="133.5" y="177.8" width="461" height="230" fill="none" stroke="#000" stroke-width="2" stroke-dasharray="4.5 1.5" stroke-dashoffset="-2.5"/></svg></div>
<div class="a" id="tb"><svg width="80" height="40" viewBox="57 111 80 40" style="position:absolute;left:0;top:0">
<rect x="63" y="116.3" width="28.6" height="22.7" fill="none" stroke="#fff" stroke-width="2"/>
<path d="M85.7,117.7 L69.3,122.6 L74.2,127.3 L63.6,138.9 L68.1,144.3 L71.4,140.6 L78.9,131.4 L83,136.3 Z" fill="#566c79" stroke="#fff" stroke-width="1.7" stroke-linejoin="miter"/>
<rect x="103" y="116.3" width="28.6" height="22.7" fill="none" stroke="#fff" stroke-width="2" stroke-dasharray="5 2.6"/>
<path d="M85.7,117.7 L69.3,122.6 L74.2,127.3 L63.6,138.9 L68.1,144.3 L71.4,140.6 L78.9,131.4 L83,136.3 Z" transform="translate(40,0)" fill="#566c79" stroke="#fff" stroke-width="1.7" stroke-linejoin="miter"/>
</svg></div>
<div class="circ" style="left:143px;top:98px"><svg width="40" height="40" viewBox="0 0 40 40" style="position:absolute;left:0;top:0"><path d="M15.3,16.7 L19.7,13.4 L21.4,13.4 L21.4,28 L19.4,28 L19.4,16.2 L15.3,18.7 Z" fill="#fff"/></svg></div>

<div class="a t lbl" style="left:711px;top:109px">Zoom to...</div>
<div class="inp" style="left:711px;top:124px;width:152px;height:39px"><span class="a t" style="left:10px;top:13px;letter-spacing:-0.15px">- Project -</span></div>
<svg class="a" style="left:830px;top:135px" width="24" height="24" viewBox="830 135 24 24"><path d="M837.6,143.4 L843,148.8 L848.4,143.4" fill="none" stroke="#50646f" stroke-width="2.2"/></svg>
<div class="circ" style="left:797px;top:95px">2</div>
<div class="a" style="left:865px;top:126px;width:39px;height:39px;border-radius:50%;background:#3e88d2"></div>
<svg class="a" style="left:870px;top:130px" width="30" height="30" viewBox="870 130 30 30"><circle cx="883.2" cy="145.3" r="5.1" fill="none" stroke="#fff" stroke-width="2.3"/><path d="M886.8,149 L891.2,153.3" stroke="#fff" stroke-width="2.5" stroke-linecap="round"/></svg>

<div class="a t lbl" style="left:711px;top:191px">Maximum scale</div>
<div class="a t" style="left:711px;top:219px;font-size:16px">1 :</div>
<div class="inp" style="left:733px;top:206px;width:140px;height:39px"><span class="a t" style="left:10px;top:13px">1 000</span></div>
<div class="circ" style="left:864px;top:203px">3</div>

<div class="a t lbl" style="left:711px;top:271px">Allow additional levels</div>
<div class="a" style="left:711px;top:288px;width:20px;height:20px;border:2px solid #50646f;border-radius:2px"></div>

<div class="a t lbl" style="left:721px;top:339px;letter-spacing:-0.6px">LEVEL</div>
<div class="a t lbl" style="left:827px;top:339px;letter-spacing:-0.5px">SCALE</div>
<div class="a" style="left:711px;top:362px;width:212px;height:2px;background:#bdd0db"></div>
<div class="circ" style="left:770px;top:316px">4</div>

<div class="a t" style="left:721px;top:377px;font-size:14px;color:#84949e">1</div>
<div class="a t" style="left:827px;top:377px;font-size:14px;color:#84949e">1:559082263</div>
<div class="a" style="left:711px;top:402px;width:212px;height:1px;background:#d5e0e6"></div>
<div class="a t" style="left:721px;top:416px;font-size:14px;color:#84949e">...</div>
<div class="a t" style="left:827px;top:416px;font-size:14px;color:#84949e">...</div>
<div class="a" style="left:711px;top:441px;width:212px;height:1px;background:#d5e0e6"></div>
<div class="a t" style="left:721px;top:455px;font-size:14px;color:#84949e">20</div>
<div class="a t" style="left:827px;top:455px;font-size:14px;color:#84949e">1:1066</div>

<div class="a t" style="left:21px;top:503px;font-size:14px">Maximum extent</div>
<div class="circ" style="left:143px;top:488px">5</div>

<div class="a t lbl" style="left:28px;top:531px">X (meters)</div>
<div class="inp" style="left:28px;top:546px;width:140px;height:39px"><span class="a t" style="left:10px;top:13px">-19000000.0000</span></div>
<div class="a t lbl" style="left:256px;top:531px">Y (meters)</div>
<div class="inp" style="left:256px;top:546px;width:140px;height:39px"><span class="a t" style="left:10px;top:13px">0.0000</span></div>
<div class="a t lbl" style="left:484px;top:531px">Width (meters)</div>
<div class="inp" style="left:484px;top:546px;width:140px;height:39px"><span class="a t" style="left:10px;top:13px">15000000.0000</span></div>
<div class="a t lbl" style="left:711px;top:531px">Height (meters)</div>
<div class="inp" style="left:711px;top:546px;width:140px;height:39px"><span class="a t" style="left:10px;top:13px">12000000.0000</span></div>

<div class="a" id="sb"></div>
<div class="a" id="thumb"></div>

<div class="a" id="footer"></div>
<div class="a" style="left:30px;top:620px;width:934px;height:37px;background:linear-gradient(to bottom, rgba(0,0,0,0), rgba(0,0,0,0.06));-webkit-mask-image:linear-gradient(to right, transparent 0, #000 70px, #000 860px, transparent 934px)"></div>
<svg class="a" style="left:945px;top:638px" width="19" height="19" viewBox="945 638 19 19"><path d="M952,650 L959.5,642.5 M954.5,650.5 L960,645 M957,650.5 L960,647.5" stroke="#9da3a7" stroke-width="1.1"/></svg>
<div class="btn" style="left:668px;width:91px">Cancel</div>
<div class="btn" style="left:762px;width:102px">Previous</div>
<div class="btn" style="left:868px;width:77px">Next</div>
</body></html>
